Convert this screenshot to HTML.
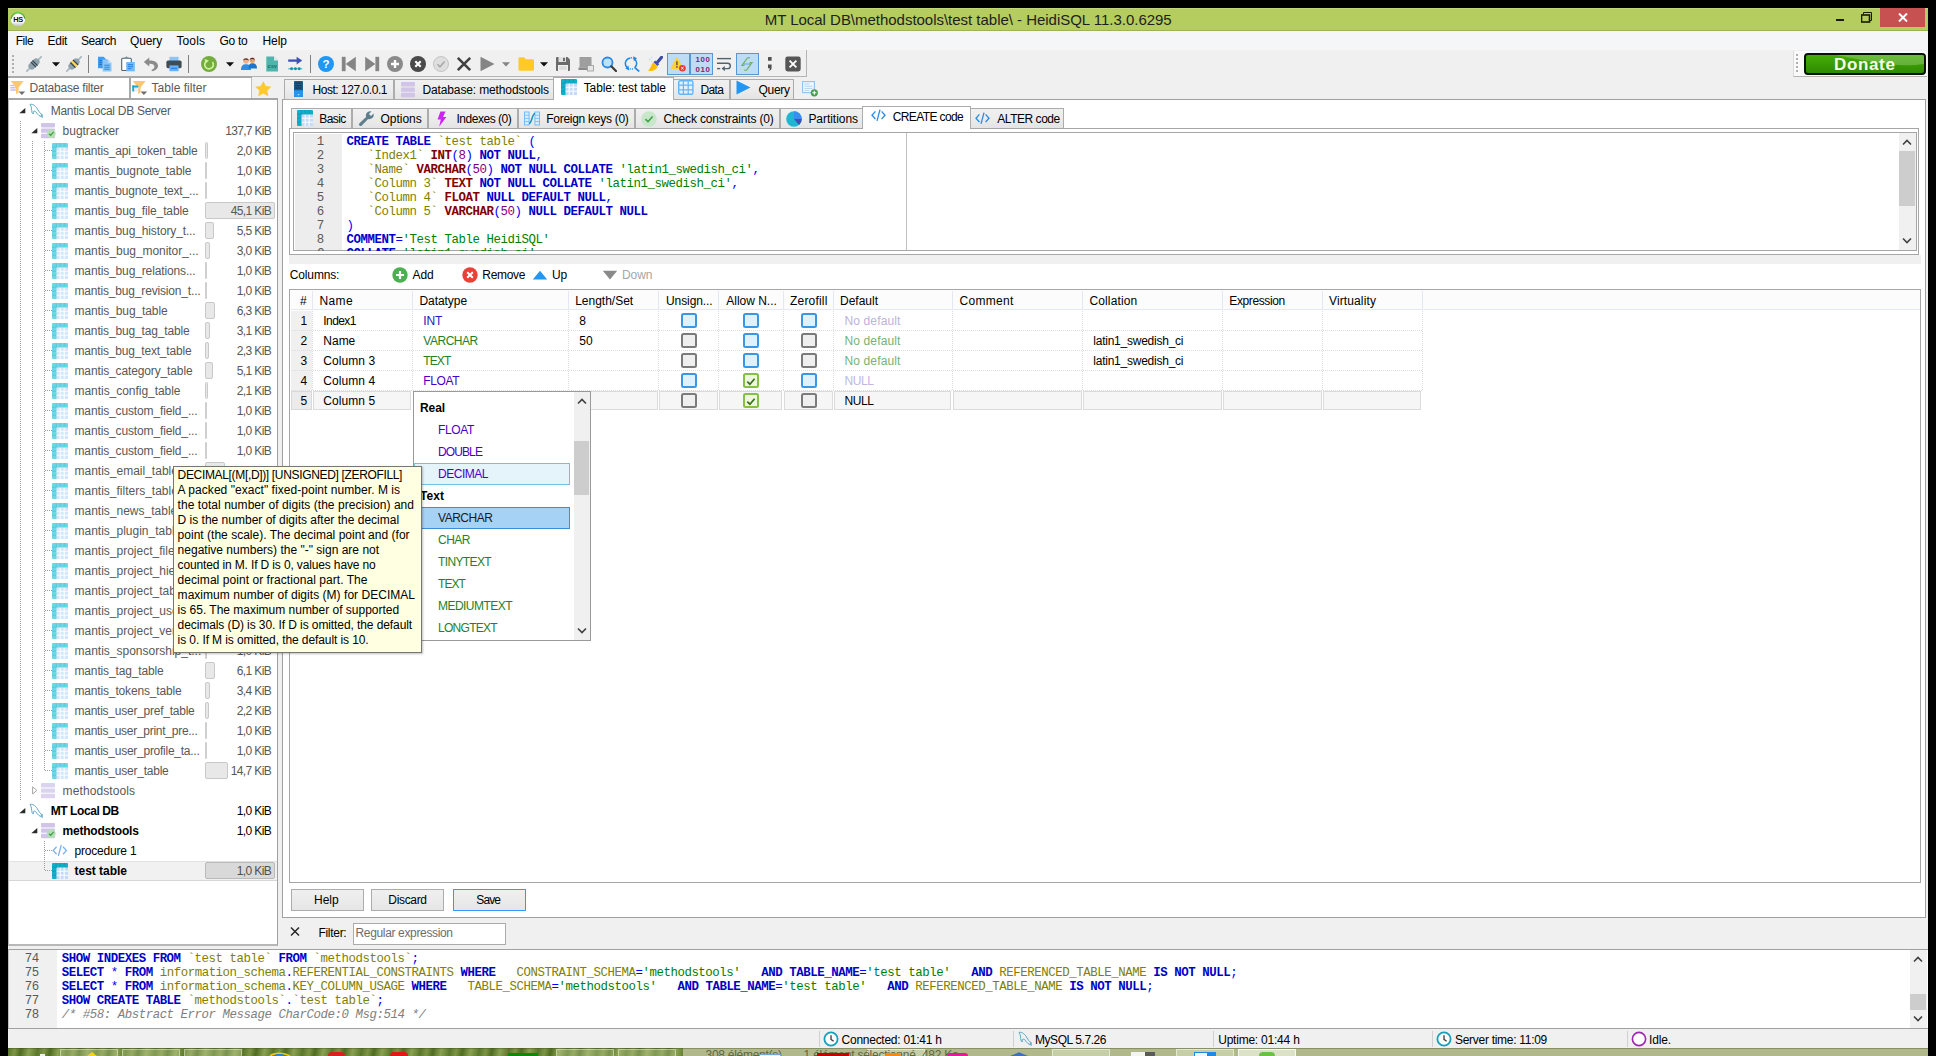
<!DOCTYPE html>
<html lang="en"><head><meta charset="utf-8"><title>HeidiSQL</title><style>
html,body{margin:0;padding:0;}
body{width:1936px;height:1056px;background:#000;position:relative;overflow:hidden;font-family:"Liberation Sans",sans-serif;font-size:12px;}
body div, body svg, body span.t{position:absolute;box-sizing:border-box;}
span.t{white-space:pre;}
.code span{white-space:pre;}
</style></head>
<body>
<div style="left:8px;top:8px;width:1920px;height:1040px;background:#f0f0f0;"></div>
<div style="left:8px;top:8px;width:1920px;height:22.5px;background:#b5cc5f;"></div>
<span class="t" style='left:764.70px;top:10.00px;font-size:15px;line-height:20px;color:#1e1e1e;letter-spacing:-0.022px;'>MT Local DB\methodstools\test table\ - HeidiSQL 11.3.0.6295</span>
<svg style="left:10px;top:11px;" width="16" height="16" viewBox="0 0 16 16"><defs><linearGradient id="hsg" x1="0" y1="0" x2="0" y2="1"><stop offset="0.6" stop-color="#fff"/><stop offset="1" stop-color="#bdbdbd"/></linearGradient><linearGradient id="hsg2" x1="0" y1="0" x2="0" y2="1"><stop offset="0" stop-color="#7fd455"/><stop offset="0.45" stop-color="#3f951f"/></linearGradient></defs><circle cx="8" cy="7.9" r="7.3" fill="url(#hsg2)"/><path d="M0.7 7.9 A7.3 7.3 0 0 0 15.3 7.9 Z" fill="url(#hsg)"/><circle cx="8" cy="9.1" r="6.5" fill="url(#hsg)"/><text x="8" y="10.7" font-size="7.4" font-weight="bold" text-anchor="middle" font-family="Liberation Sans, sans-serif" fill="#111" letter-spacing="-0.3">HS</text></svg>
<div style="left:8px;top:8px;width:1920px;height:1px;background:#c3d67c;"></div>
<div style="left:8px;top:29.5px;width:1920px;height:1px;background:#9fb057;"></div>
<div style="left:1836px;top:19px;width:8px;height:2px;background:#1a1a00;"></div>
<svg style="left:1861px;top:12px;" width="11" height="11" viewBox="0 0 11 11"><path d="M2.5 2.5 V0.5 H10.5 V8.5 H8.5" fill="none" stroke="#1a1a00" stroke-width="1"/><rect x="0.5" y="3" width="8" height="7" fill="none" stroke="#1a1a00" stroke-width="1.6"/></svg>
<div style="left:1880px;top:8px;width:45px;height:19px;background:#c75050;"></div>
<svg style="left:1898px;top:13px;" width="10" height="9" viewBox="0 0 10 9"><path d="M1 0.5 L9 8.5 M9 0.5 L1 8.5" stroke="#fff" stroke-width="2" fill="none"/></svg>
<div style="left:8px;top:31px;width:1920px;height:19px;background:#f5f6f7;"></div>
<span class="t" style='left:15.70px;top:33.00px;font-size:12px;line-height:16px;color:#000;letter-spacing:-0.461px;'>File</span>
<span class="t" style='left:47.60px;top:33.00px;font-size:12px;line-height:16px;color:#000;letter-spacing:-0.297px;'>Edit</span>
<span class="t" style='left:81.00px;top:33.00px;font-size:12px;line-height:16px;color:#000;letter-spacing:-0.505px;'>Search</span>
<span class="t" style='left:130.00px;top:33.00px;font-size:12px;line-height:16px;color:#000;letter-spacing:-0.138px;'>Query</span>
<span class="t" style='left:176.50px;top:33.00px;font-size:12px;line-height:16px;color:#000;letter-spacing:0.097px;'>Tools</span>
<span class="t" style='left:219.50px;top:33.00px;font-size:12px;line-height:16px;color:#000;letter-spacing:-0.272px;'>Go to</span>
<span class="t" style='left:262.50px;top:33.00px;font-size:12px;line-height:16px;color:#000;letter-spacing:-0.047px;'>Help</span>
<div style="left:8px;top:50px;width:799px;height:27px;border-right:1px solid #b4b4b4;border-bottom:1px solid #b4b4b4;"></div>
<div style="left:12px;top:55px;width:2px;height:2px;background:#b0b0b0;"></div>
<div style="left:12px;top:59px;width:2px;height:2px;background:#b0b0b0;"></div>
<div style="left:12px;top:63px;width:2px;height:2px;background:#b0b0b0;"></div>
<div style="left:12px;top:67px;width:2px;height:2px;background:#b0b0b0;"></div>
<div style="left:12px;top:71px;width:2px;height:2px;background:#b0b0b0;"></div>
<div style="left:667px;top:53px;width:23px;height:22px;background:#bfdcf5;border:1px solid #5598d8;"></div>
<div style="left:690px;top:53px;width:23px;height:22px;background:#bfdcf5;border:1px solid #5598d8;"></div>
<div style="left:736px;top:53px;width:23px;height:22px;background:#bfdcf5;border:1px solid #5598d8;"></div>
<svg style="left:26px;top:56px;" width="16" height="16" viewBox="0 0 16 16"><g transform="rotate(45 8 8)"><rect x="7.2" y="-3" width="1.6" height="22" fill="#a9b8c0"/><rect x="4.6" y="1.6" width="6.8" height="12.8" rx="3.2" fill="#8fa3ad"/><rect x="4.4" y="6" width="7.2" height="1.2" fill="#37474f"/><rect x="4.4" y="8.2" width="7.2" height="1.2" fill="#37474f"/></g></svg>
<svg style="left:52px;top:62px;" width="8" height="5" viewBox="0 0 8 5"><path d="M0 0.3 H8 L4 4.6 Z" fill="#111"/></svg>
<svg style="left:66px;top:56px;" width="16" height="16" viewBox="0 0 16 16"><g transform="rotate(45 8 8)"><rect x="7.2" y="-3" width="1.6" height="22" fill="#a9b8c0"/><rect x="4.6" y="1.6" width="6.8" height="12.8" rx="3.2" fill="#8fa3ad"/><rect x="4.4" y="5.2" width="7.2" height="1.3" fill="#37474f"/><rect x="4.4" y="6.5" width="7.2" height="2.4" fill="#ffd54f"/><rect x="4.4" y="8.9" width="7.2" height="1.3" fill="#37474f"/></g></svg>
<div style="left:88px;top:55px;width:1px;height:18px;background:#808080;"></div>
<svg style="left:97px;top:56px;" width="16" height="16" viewBox="0 0 16 16"><path d="M1 0.8 h5.6 l3 3 v8.4 h-8.6z" fill="#3f9bef"/><path d="M2.5 4.5h2M2.5 6.5h2M2.5 8.5h2" stroke="#1b6dc2" stroke-width="1"/><path d="M5.6 3.6 h5.6 l3.3 3.3 v8.6 h-8.9z" fill="#8cc6f8"/><path d="M11.2 3.6 l3.3 3.3 h-3.3z" fill="#c3e1fb"/><path d="M7.3 9.2h5.4M7.3 11.2h5.4M7.3 13.2h5.4" stroke="#2f86dd" stroke-width="1"/></svg>
<svg style="left:120px;top:56px;" width="16" height="16" viewBox="0 0 16 16"><rect x="1.7" y="2.3" width="9.6" height="12.2" rx="1" fill="#fff" stroke="#4f636d" stroke-width="1.1"/><path d="M4.3 2.8 V1.6 h1.2 a1 1 0 0 1 2 0 h1.2 V2.8z" fill="#78909c"/><rect x="6.2" y="6" width="8.6" height="9.3" fill="#74b9f5"/><path d="M7.8 8.6h5.2M7.8 10.6h5.2M7.8 12.6h3.6" stroke="#2a83dc" stroke-width="1"/></svg>
<svg style="left:143px;top:56px;" width="16" height="16" viewBox="0 0 16 16"><path d="M6.3 1.5 L0.8 6 L6.3 10.5 V7.7 C9.6 7.5 11.4 8.6 11.4 10.8 C11.4 12.2 10.4 13.3 8.6 14 L8.9 15.3 C12.6 14.8 15 12.6 15 9.8 C15 6.4 11.6 4.2 6.3 4.4 Z" fill="#8a8a8a"/></svg>
<svg style="left:166px;top:56px;" width="16" height="16" viewBox="0 0 16 16"><rect x="3.4" y="0.8" width="9.2" height="4.6" fill="#8cc6f8"/><rect x="0.4" y="4.6" width="15.2" height="7.6" rx="1.6" fill="#3e4c54"/><rect x="3.4" y="9.4" width="9.2" height="5.8" fill="#64b1f4"/><path d="M5 12.4h6" stroke="#2a83dc" stroke-width="1.2"/></svg>
<div style="left:188px;top:55px;width:1px;height:18px;background:#808080;"></div>
<svg style="left:201px;top:56px;" width="16" height="16" viewBox="0 0 16 16"><circle cx="8" cy="8" r="8" fill="#74ad3d"/><path d="M5.4 5.2 A4.3 4.3 0 1 0 11.4 5.9" fill="none" stroke="#cdf59a" stroke-width="1.6"/><path d="M3.6 2.9 L7.9 4.4 L4.6 7.5 Z" fill="#cdf59a"/></svg>
<svg style="left:226px;top:62px;" width="8" height="5" viewBox="0 0 8 5"><path d="M0 0.3 H8 L4 4.6 Z" fill="#111"/></svg>
<svg style="left:241px;top:56px;" width="16" height="16" viewBox="0 0 16 16"><circle cx="5" cy="5" r="2.8" fill="#f2b184"/><path d="M0 14 C0 9.5 2 8.3 5 8.3 C8 8.3 10 9.5 10 14 Z" fill="#2f8de4"/><circle cx="11.3" cy="4.2" r="2.6" fill="#e6a06a"/><path d="M7.5 12.5 C7.6 8.5 9 7.3 11.3 7.3 C14 7.3 16 8.5 16 12.5 Z" fill="#1c74d0"/><path d="M2.2 4.5 C2.5 1.5 7.5 1.5 7.8 4.5 C6 3.4 4 3.4 2.2 4.5Z" fill="#5d4037"/><path d="M8.7 3.8 C9 0.9 13.6 0.9 13.9 3.8 C12 2.8 10.5 2.8 8.7 3.8Z" fill="#4e342e"/></svg>
<svg style="left:264px;top:56px;" width="16" height="16" viewBox="0 0 16 16"><path d="M2.3 0.5 h7.7 l4 4 v11 h-11.7z" fill="#4db6ac"/><path d="M10 0.5 l4 4 h-4z" fill="#d4efec"/><text x="8.2" y="11.6" font-size="5.6" font-weight="bold" text-anchor="middle" fill="#0e7369" font-family="Liberation Sans, sans-serif">csv</text></svg>
<svg style="left:287px;top:56px;" width="16" height="16" viewBox="0 0 16 16"><path d="M1.2 4.6 H10.5" stroke="#3f51b5" stroke-width="2.3"/><path d="M9.6 0.8 L15.2 4.6 L9.6 8.4 Z" fill="#3f51b5"/><path d="M1.2 12.8h14" stroke="#26a5b8" stroke-width="0.9"/><circle cx="4.6" cy="12.8" r="1.45" fill="#0f93a8"/><circle cx="8.4" cy="12.8" r="1.45" fill="#0f93a8"/><circle cx="12.2" cy="12.8" r="1.45" fill="#0f93a8"/></svg>
<div style="left:310px;top:55px;width:1px;height:18px;background:#808080;"></div>
<svg style="left:318px;top:56px;" width="16" height="16" viewBox="0 0 16 16"><circle cx="8" cy="8" r="8" fill="#2196f3"/><text x="8" y="12.2" font-size="11.5" font-weight="bold" text-anchor="middle" fill="#fff" font-family="Liberation Sans, sans-serif">?</text></svg>
<svg style="left:341px;top:56px;" width="16" height="16" viewBox="0 0 16 16"><rect x="0.8" y="0.8" width="3.8" height="14.4" fill="#858585"/><path d="M14.8 0.8 V15.2 L4.6 8 Z" fill="#858585"/></svg>
<svg style="left:364px;top:56px;" width="16" height="16" viewBox="0 0 16 16"><rect x="11.4" y="0.8" width="3.8" height="14.4" fill="#858585"/><path d="M1.2 0.8 V15.2 L11.4 8 Z" fill="#858585"/></svg>
<svg style="left:387px;top:56px;" width="16" height="16" viewBox="0 0 16 16"><circle cx="8" cy="8" r="8" fill="#8a8a8a"/><path d="M8 4v8M4 8h8" stroke="#fff" stroke-width="2.4"/></svg>
<svg style="left:410px;top:56px;" width="16" height="16" viewBox="0 0 16 16"><circle cx="8" cy="8" r="8" fill="#4a4a4a"/><path d="M5.3 5.3l5.4 5.4M10.7 5.3l-5.4 5.4" stroke="#fff" stroke-width="2.2"/></svg>
<svg style="left:433px;top:56px;" width="16" height="16" viewBox="0 0 16 16"><circle cx="8" cy="8" r="7.5" fill="#dedede" stroke="#c4c4c4" stroke-width="1"/><path d="M4.5 8.3 L7 10.8 L11.6 5.6" fill="none" stroke="#a8a8a8" stroke-width="1.5"/></svg>
<svg style="left:456px;top:56px;" width="16" height="16" viewBox="0 0 16 16"><path d="M1.8 1.8 L14.2 14.2 M14.2 1.8 L1.8 14.2" stroke="#424242" stroke-width="2.6"/></svg>
<svg style="left:479px;top:56px;" width="16" height="16" viewBox="0 0 16 16"><path d="M1.5 0.8 V15.2 L15.5 8 Z" fill="#858585"/></svg>
<svg style="left:502px;top:62px;" width="8" height="5" viewBox="0 0 8 5"><path d="M0 0.3 H8 L4 4.6 Z" fill="#858585"/></svg>
<svg style="left:518px;top:56px;" width="16" height="16" viewBox="0 0 16 16"><path d="M0.5 2.5 a1.2 1.2 0 0 1 1.2 -1.2 h4.3 l1.8 2 h7 a1.2 1.2 0 0 1 1.2 1.2 v9 a1.2 1.2 0 0 1 -1.2 1.2 h-13.1 a1.2 1.2 0 0 1 -1.2 -1.2z" fill="#ffca28"/></svg>
<svg style="left:540px;top:62px;" width="8" height="5" viewBox="0 0 8 5"><path d="M0 0.3 H8 L4 4.6 Z" fill="#111"/></svg>
<svg style="left:555px;top:56px;" width="16" height="16" viewBox="0 0 16 16"><path d="M1 2 a1 1 0 0 1 1 -1 h10.5 l2.5 2.5 v10.5 a1 1 0 0 1 -1 1 h-12 a1 1 0 0 1 -1 -1z" fill="#6b6b6b"/><rect x="3.5" y="1" width="7.5" height="5" fill="#e2e2e2"/><rect x="8" y="1.8" width="2" height="3.4" fill="#6b6b6b"/><rect x="3" y="9" width="10" height="6" fill="#f2f2f2"/><path d="M4.2 11h7.6M4.2 13h7.6" stroke="#bdbdbd" stroke-width="0.8"/></svg>
<svg style="left:578px;top:56px;" width="16" height="16" viewBox="0 0 16 16"><path d="M1.5 1 h12 v10.5 h-12z" fill="#9e9e9e"/><rect x="0.5" y="11.5" width="9" height="2.5" fill="#8a8a8a"/><rect x="9.5" y="9.5" width="6" height="5.5" fill="#e6e6e6" stroke="#9a9a9a" stroke-width="0.8"/></svg>
<svg style="left:601px;top:56px;" width="16" height="16" viewBox="0 0 16 16"><circle cx="6.5" cy="6.5" r="5" fill="#bfe0fb" stroke="#2b8be0" stroke-width="1.8"/><path d="M10.3 10.3 L15 15" stroke="#3a3a3a" stroke-width="2.2" stroke-linecap="round"/></svg>
<svg style="left:624px;top:56px;" width="16" height="16" viewBox="0 0 16 16"><path d="M6.4 1.9 A5.6 5.6 0 0 0 3 11.4" fill="none" stroke="#1e88e5" stroke-width="1.5"/><path d="M10.4 2.9 A5.6 5.6 0 0 1 10.6 11.8" fill="none" stroke="#1e88e5" stroke-width="1.5"/><path d="M3.8 12.1 A5.6 5.6 0 0 0 9.2 12.6" fill="none" stroke="#1e88e5" stroke-width="1.4" stroke-dasharray="1 1.1"/><path d="M6.9 1.8 A5.6 5.6 0 0 1 9.6 2.4" fill="none" stroke="#1e88e5" stroke-width="1.4" stroke-dasharray="1 1"/><path d="M9.2 0.2 L13 2.2 L9.9 5.2Z" fill="#1e88e5"/><path d="M5.2 14.6 L1.4 12.6 L4.4 9.6Z" fill="#1e88e5"/><path d="M10.8 11.6 L15.2 15.4" stroke="#1e88e5" stroke-width="1.7"/></svg>
<svg style="left:647px;top:56px;" width="16" height="16" viewBox="0 0 16 16"><path d="M14.6 1.2 L9.8 7" stroke="#3949ab" stroke-width="3" stroke-linecap="round"/><path d="M8.2 4.4 L12.2 8.2 L10.4 10 L6.4 6.2Z" fill="#3f51b5"/><path d="M6.2 6 L10.6 10.2 C10 13.2 6.5 15.6 1 14.8 C3.6 12.6 4 9 6.2 6Z" fill="#ffc107"/><path d="M3 13.6 C5 12.6 6.6 11 7.6 9" stroke="#ffa000" stroke-width="0.7" fill="none"/><circle cx="2.6" cy="3.4" r="0.9" fill="#bbdefb"/><circle cx="4.6" cy="1.4" r="0.7" fill="#bbdefb"/><circle cx="4.4" cy="5.2" r="0.6" fill="#bbdefb"/></svg>
<svg style="left:670px;top:56px;" width="16" height="16" viewBox="0 0 16 16"><path d="M6.1 1.9 a0.9 0.9 0 0 1 1.6 0 L13 11.8 a0.9 0.9 0 0 1 -0.8 1.3 H1.6 a0.9 0.9 0 0 1 -0.8 -1.3Z" fill="#fdd13a"/><path d="M6.9 5.2v4" stroke="#6d4c41" stroke-width="1.4"/><circle cx="6.9" cy="10.9" r="0.85" fill="#6d4c41"/><circle cx="12.4" cy="12.2" r="3.3" fill="#e53935"/><path d="M11.2 11l2.4 2.4M13.6 11l-2.4 2.4" stroke="#fff" stroke-width="1"/></svg>
<div style='left:693px;top:55.3px;width:20px;height:20px;font:bold 7.9px/9.3px "Liberation Sans", sans-serif;color:#8a1c74;letter-spacing:0.65px;text-align:center;'><span>100</span><br><span>010</span></div>
<svg style="left:716px;top:56px;" width="16" height="16" viewBox="0 0 16 16"><path d="M1 2.6h14" stroke="#4f636d" stroke-width="1.4" fill="none"/><path d="M1 7.2h10.6 a2.7 2.7 0 0 1 0 5.4 h-3.4" fill="none" stroke="#4f636d" stroke-width="1.4"/><path d="M8.8 9.9 L5.6 12.6 L8.8 15.3Z" fill="#4f636d"/><path d="M1 12.6h3.2" stroke="#4f636d" stroke-width="1.4"/></svg>
<svg style="left:739px;top:56px;" width="16" height="16" viewBox="0 0 16 16"><path d="M10.8 1.6 L8.4 2 L3 9.4 L5.4 9.4" fill="none" stroke="#6db35c" stroke-width="1.25"/><path d="M5.2 14.4 L7.6 14 L13 6.6 L10.6 6.6" fill="none" stroke="#6db35c" stroke-width="1.25"/><path d="M5.2 8h5.8" stroke="#2b7fd8" stroke-width="1.2" stroke-dasharray="1.3 0.9"/></svg>
<svg style="left:762px;top:56px;" width="16" height="16" viewBox="0 0 16 16"><rect x="6" y="1" width="3.6" height="3.8" rx="0.5" fill="#505050"/><path d="M6 8.6 h3.6 v3.2 c0 1.7 -1 2.9 -3.2 3.3 c1.1 -1 1.4 -1.9 1.3 -2.9 h-1.7z" fill="#505050"/></svg>
<svg style="left:785px;top:56px;" width="16" height="16" viewBox="0 0 16 16"><rect x="0.3" y="0.6" width="15.4" height="14.8" rx="2.4" fill="#565656"/><path d="M4.6 4.6l6.8 6.8M11.4 4.6l-6.8 6.8" stroke="#fff" stroke-width="1.8"/></svg>
<div style="left:1793px;top:51px;width:134px;height:26px;background:#fafafa;border-left:1px solid #dcdcdc;border-bottom:1px solid #b4b4b4;"></div>
<div style="left:1796px;top:54px;width:2px;height:2px;background:#b0b0b0;"></div>
<div style="left:1796px;top:58px;width:2px;height:2px;background:#b0b0b0;"></div>
<div style="left:1796px;top:62px;width:2px;height:2px;background:#b0b0b0;"></div>
<div style="left:1796px;top:66px;width:2px;height:2px;background:#b0b0b0;"></div>
<div style="left:1796px;top:70px;width:2px;height:2px;background:#b0b0b0;"></div>
<div style="left:1804px;top:53px;width:122px;height:22px;background:linear-gradient(#43ad05,#3c9e04 45%,#2f8a02);border:2px solid #081203;border-radius:4px;"></div>
<svg style="left:1806px;top:55px;" width="118" height="18" viewBox="0 0 118 18"><path d="M30 0 H118 V9 C90 13 60 6 30 0Z" fill="rgba(255,255,255,0.22)"/></svg>
<span class="t" style='left:1834.00px;top:53.00px;font-size:17px;line-height:23px;color:#f4ffe8;font-weight:bold;letter-spacing:0.646px;'>Donate</span>
<div style="left:8px;top:76px;width:244px;height:2px;background:#a9a9a9;"></div>
<div style="left:9px;top:78px;width:122px;height:20px;background:#fff;border-right:2px solid #a9a9a9;"></div>
<div style="left:131px;top:78px;width:121px;height:20px;background:#fff;border-right:1px solid #c0c0c0;"></div>
<span class="t" style='left:29.60px;top:80.00px;font-size:12px;line-height:16px;color:#5a5a5a;letter-spacing:-0.225px;'>Database filter</span>
<span class="t" style='left:151.60px;top:80.00px;font-size:12px;line-height:16px;color:#5a5a5a;letter-spacing:0.025px;'>Table filter</span>
<svg style="left:10.3px;top:80px;" width="18" height="16" viewBox="0 0 18 16"><path d="M0.3 5.6h5.6M0.3 7.8h5.6M0.3 10h5.6" stroke="#cdbdea" stroke-width="1.5"/><path d="M0.6 1 H13.6 L8.6 7.6 V12.8 L6 14 V7.6 Z" fill="#fcc772"/><path d="M8.6 11.4 h6.6 l-3.3 3.6z" fill="#6e6e6e"/></svg>
<svg style="left:132.3px;top:80px;" width="18" height="16" viewBox="0 0 18 16"><path d="M0.6 1 H13.6 L8.6 7.6 V12.8 L6 14 V7.6 Z" fill="#fcc772"/><path d="M8.6 11.4 h6.6 l-3.3 3.6z" fill="#6e6e6e"/><rect x="0.3" y="5.5" width="6" height="6" fill="#e4f1fd"/><rect x="0.3" y="5.5" width="6" height="2" fill="#19aac3"/><rect x="0.3" y="5.5" width="1.8" height="6" fill="#19aac3"/></svg>
<svg style="left:254.5px;top:80.5px;" width="17" height="16" viewBox="0 0 17 16"><path d="M8.3 0.6 L10.7 5.3 L15.8 6 L12 9.6 L13 14.8 L8.3 12.3 L3.6 14.8 L4.6 9.6 L0.8 6 L5.9 5.3 Z" fill="#fdc92f" stroke="#fdc92f" stroke-width="0.6" stroke-linejoin="round"/></svg>
<div style="left:8px;top:98px;width:270px;height:848px;background:#fff;border-top:2px solid #a6a6a6;border-right:1px solid #a0a0a0;border-left:1px solid #b8b8b8;border-bottom:2px solid #b8b8b8;"></div>
<div style="left:9px;top:861px;width:268px;height:20px;background:#f1f1f1;border-top:1px solid #e2e2e2;border-bottom:1px solid #d6d6d6;"></div>
<div style="left:20px;top:121px;width:1px;height:680px;background:repeating-linear-gradient(#9c9c9c 0 1px,transparent 1px 2px);"></div>
<div style="left:32px;top:141px;width:1px;height:641px;background:repeating-linear-gradient(#9c9c9c 0 1px,transparent 1px 2px);"></div>
<div style="left:44px;top:141px;width:1px;height:630px;background:repeating-linear-gradient(#9c9c9c 0 1px,transparent 1px 2px);"></div>
<div style="left:45px;top:150px;width:7px;height:1px;background:repeating-linear-gradient(90deg,#9c9c9c 0 1px,transparent 1px 2px);"></div>
<div style="left:45px;top:170px;width:7px;height:1px;background:repeating-linear-gradient(90deg,#9c9c9c 0 1px,transparent 1px 2px);"></div>
<div style="left:45px;top:190px;width:7px;height:1px;background:repeating-linear-gradient(90deg,#9c9c9c 0 1px,transparent 1px 2px);"></div>
<div style="left:45px;top:210px;width:7px;height:1px;background:repeating-linear-gradient(90deg,#9c9c9c 0 1px,transparent 1px 2px);"></div>
<div style="left:45px;top:230px;width:7px;height:1px;background:repeating-linear-gradient(90deg,#9c9c9c 0 1px,transparent 1px 2px);"></div>
<div style="left:45px;top:250px;width:7px;height:1px;background:repeating-linear-gradient(90deg,#9c9c9c 0 1px,transparent 1px 2px);"></div>
<div style="left:45px;top:270px;width:7px;height:1px;background:repeating-linear-gradient(90deg,#9c9c9c 0 1px,transparent 1px 2px);"></div>
<div style="left:45px;top:290px;width:7px;height:1px;background:repeating-linear-gradient(90deg,#9c9c9c 0 1px,transparent 1px 2px);"></div>
<div style="left:45px;top:310px;width:7px;height:1px;background:repeating-linear-gradient(90deg,#9c9c9c 0 1px,transparent 1px 2px);"></div>
<div style="left:45px;top:330px;width:7px;height:1px;background:repeating-linear-gradient(90deg,#9c9c9c 0 1px,transparent 1px 2px);"></div>
<div style="left:45px;top:350px;width:7px;height:1px;background:repeating-linear-gradient(90deg,#9c9c9c 0 1px,transparent 1px 2px);"></div>
<div style="left:45px;top:370px;width:7px;height:1px;background:repeating-linear-gradient(90deg,#9c9c9c 0 1px,transparent 1px 2px);"></div>
<div style="left:45px;top:390px;width:7px;height:1px;background:repeating-linear-gradient(90deg,#9c9c9c 0 1px,transparent 1px 2px);"></div>
<div style="left:45px;top:410px;width:7px;height:1px;background:repeating-linear-gradient(90deg,#9c9c9c 0 1px,transparent 1px 2px);"></div>
<div style="left:45px;top:430px;width:7px;height:1px;background:repeating-linear-gradient(90deg,#9c9c9c 0 1px,transparent 1px 2px);"></div>
<div style="left:45px;top:450px;width:7px;height:1px;background:repeating-linear-gradient(90deg,#9c9c9c 0 1px,transparent 1px 2px);"></div>
<div style="left:45px;top:470px;width:7px;height:1px;background:repeating-linear-gradient(90deg,#9c9c9c 0 1px,transparent 1px 2px);"></div>
<div style="left:45px;top:490px;width:7px;height:1px;background:repeating-linear-gradient(90deg,#9c9c9c 0 1px,transparent 1px 2px);"></div>
<div style="left:45px;top:510px;width:7px;height:1px;background:repeating-linear-gradient(90deg,#9c9c9c 0 1px,transparent 1px 2px);"></div>
<div style="left:45px;top:530px;width:7px;height:1px;background:repeating-linear-gradient(90deg,#9c9c9c 0 1px,transparent 1px 2px);"></div>
<div style="left:45px;top:550px;width:7px;height:1px;background:repeating-linear-gradient(90deg,#9c9c9c 0 1px,transparent 1px 2px);"></div>
<div style="left:45px;top:570px;width:7px;height:1px;background:repeating-linear-gradient(90deg,#9c9c9c 0 1px,transparent 1px 2px);"></div>
<div style="left:45px;top:590px;width:7px;height:1px;background:repeating-linear-gradient(90deg,#9c9c9c 0 1px,transparent 1px 2px);"></div>
<div style="left:45px;top:610px;width:7px;height:1px;background:repeating-linear-gradient(90deg,#9c9c9c 0 1px,transparent 1px 2px);"></div>
<div style="left:45px;top:630px;width:7px;height:1px;background:repeating-linear-gradient(90deg,#9c9c9c 0 1px,transparent 1px 2px);"></div>
<div style="left:45px;top:650px;width:7px;height:1px;background:repeating-linear-gradient(90deg,#9c9c9c 0 1px,transparent 1px 2px);"></div>
<div style="left:45px;top:670px;width:7px;height:1px;background:repeating-linear-gradient(90deg,#9c9c9c 0 1px,transparent 1px 2px);"></div>
<div style="left:45px;top:690px;width:7px;height:1px;background:repeating-linear-gradient(90deg,#9c9c9c 0 1px,transparent 1px 2px);"></div>
<div style="left:45px;top:710px;width:7px;height:1px;background:repeating-linear-gradient(90deg,#9c9c9c 0 1px,transparent 1px 2px);"></div>
<div style="left:45px;top:730px;width:7px;height:1px;background:repeating-linear-gradient(90deg,#9c9c9c 0 1px,transparent 1px 2px);"></div>
<div style="left:45px;top:750px;width:7px;height:1px;background:repeating-linear-gradient(90deg,#9c9c9c 0 1px,transparent 1px 2px);"></div>
<div style="left:45px;top:770px;width:7px;height:1px;background:repeating-linear-gradient(90deg,#9c9c9c 0 1px,transparent 1px 2px);"></div>
<div style="left:44px;top:841px;width:1px;height:30px;background:repeating-linear-gradient(#9c9c9c 0 1px,transparent 1px 2px);"></div>
<div style="left:45px;top:850px;width:7px;height:1px;background:repeating-linear-gradient(90deg,#9c9c9c 0 1px,transparent 1px 2px);"></div>
<div style="left:45px;top:870px;width:7px;height:1px;background:repeating-linear-gradient(90deg,#9c9c9c 0 1px,transparent 1px 2px);"></div>
<svg style="left:19px;top:108px;" width="7" height="6" viewBox="0 0 7 6"><path d="M6.3 0 V5.3 H0.3 Z" fill="#2a2a2a"/></svg>
<svg style="left:29px;top:103px;" width="16" height="16" viewBox="0 0 16 16"><path d="M1 1.5 C3 0.5 6.5 2.5 8.5 6 C10 8.8 11 10.5 13.8 12.2 L11.8 12.4 L13.8 14.2 C10.5 13.6 8.6 11.5 7 9 C6.3 7.9 5.2 7.8 4.2 8.8 L4.3 11 L3 9.6 C2.4 6.5 2.8 3.5 1 1.5 Z" fill="none" stroke="#4e9fc0" stroke-width="0.9" stroke-linejoin="round"/></svg>
<span class="t" style='left:50.70px;top:103.00px;font-size:12px;line-height:16px;color:#585858;letter-spacing:-0.275px;'>Mantis Local DB Server</span>
<svg style="left:31px;top:128px;" width="7" height="6" viewBox="0 0 7 6"><path d="M6.3 0 V5.3 H0.3 Z" fill="#2a2a2a"/></svg>
<svg style="left:41px;top:123px;" width="15" height="16" viewBox="0 0 15 16"><rect x="0" y="0" width="14" height="4.4" rx="0.8" fill="#d1c4e9"/><rect x="0" y="5.4" width="14" height="4.4" rx="0.8" fill="#d1c4e9"/><rect x="0" y="10.8" width="14" height="4.4" rx="0.8" fill="#d1c4e9"/><circle cx="10.3" cy="10.6" r="4.4" fill="#b6dfb8"/><path d="M8.1 10.7 L9.7 12.3 L12.6 8.8" fill="none" stroke="#3f9f44" stroke-width="1.3"/></svg>
<span class="t" style='left:62.60px;top:123.00px;font-size:12px;line-height:16px;color:#585858;letter-spacing:-0.020px;'>bugtracker</span>
<span class="t" style='left:225.13px;top:123.00px;font-size:12px;line-height:16px;color:#585858;letter-spacing:-0.672px;'>137,7 KiB</span>
<svg style="left:52px;top:143.0px;" width="16" height="16" viewBox="0 0 16 16"><rect x="0" y="0" width="16" height="16" rx="1" fill="#6fd6e3"/><rect x="4.5" y="4.5" width="11.5" height="11.5" fill="#d3e6fb"/><path d="M4.2 0V4.5M8.2 0V4.5M12.2 0V4.5M0 4.2H4.5M0 8.2H4.5M0 12.2H4.5" stroke="#52c8d8" stroke-width="0.9"/><path d="M8.2 4.5V16M12.2 4.5V16M4.5 8.2H16M4.5 12.2H16" stroke="#fbfdff" stroke-width="1.15"/></svg>
<div style="left:205px;top:142.0px;width:3.0px;height:17px;background:#e8e8e8;border:1px solid #c9c9c9;border-radius:2px;"></div>
<span class="t" style='left:74.50px;top:143.00px;font-size:12px;line-height:16px;color:#585858;letter-spacing:-0.171px;'>mantis_api_token_table</span>
<span class="t" style='left:236.70px;top:143.00px;font-size:12px;line-height:16px;color:#585858;letter-spacing:-0.600px;'>2,0 KiB</span>
<svg style="left:52px;top:163.0px;" width="16" height="16" viewBox="0 0 16 16"><rect x="0" y="0" width="16" height="16" rx="1" fill="#6fd6e3"/><rect x="4.5" y="4.5" width="11.5" height="11.5" fill="#d3e6fb"/><path d="M4.2 0V4.5M8.2 0V4.5M12.2 0V4.5M0 4.2H4.5M0 8.2H4.5M0 12.2H4.5" stroke="#52c8d8" stroke-width="0.9"/><path d="M8.2 4.5V16M12.2 4.5V16M4.5 8.2H16M4.5 12.2H16" stroke="#fbfdff" stroke-width="1.15"/></svg>
<div style="left:205px;top:162.0px;width:2px;height:17px;background:#cfcfcf;border-radius:1px;"></div>
<span class="t" style='left:74.50px;top:163.00px;font-size:12px;line-height:16px;color:#585858;letter-spacing:-0.055px;'>mantis_bugnote_table</span>
<span class="t" style='left:236.70px;top:163.00px;font-size:12px;line-height:16px;color:#585858;letter-spacing:-0.600px;'>1,0 KiB</span>
<svg style="left:52px;top:183.0px;" width="16" height="16" viewBox="0 0 16 16"><rect x="0" y="0" width="16" height="16" rx="1" fill="#6fd6e3"/><rect x="4.5" y="4.5" width="11.5" height="11.5" fill="#d3e6fb"/><path d="M4.2 0V4.5M8.2 0V4.5M12.2 0V4.5M0 4.2H4.5M0 8.2H4.5M0 12.2H4.5" stroke="#52c8d8" stroke-width="0.9"/><path d="M8.2 4.5V16M12.2 4.5V16M4.5 8.2H16M4.5 12.2H16" stroke="#fbfdff" stroke-width="1.15"/></svg>
<div style="left:205px;top:182.0px;width:2px;height:17px;background:#cfcfcf;border-radius:1px;"></div>
<span class="t" style='left:74.50px;top:183.00px;font-size:12px;line-height:16px;color:#585858;letter-spacing:-0.178px;'>mantis_bugnote_text_...</span>
<span class="t" style='left:236.70px;top:183.00px;font-size:12px;line-height:16px;color:#585858;letter-spacing:-0.600px;'>1,0 KiB</span>
<svg style="left:52px;top:203.0px;" width="16" height="16" viewBox="0 0 16 16"><rect x="0" y="0" width="16" height="16" rx="1" fill="#6fd6e3"/><rect x="4.5" y="4.5" width="11.5" height="11.5" fill="#d3e6fb"/><path d="M4.2 0V4.5M8.2 0V4.5M12.2 0V4.5M0 4.2H4.5M0 8.2H4.5M0 12.2H4.5" stroke="#52c8d8" stroke-width="0.9"/><path d="M8.2 4.5V16M12.2 4.5V16M4.5 8.2H16M4.5 12.2H16" stroke="#fbfdff" stroke-width="1.15"/></svg>
<div style="left:205px;top:202.0px;width:69.5px;height:17px;background:#e8e8e8;border:1px solid #c9c9c9;border-radius:2px;"></div>
<span class="t" style='left:74.50px;top:203.00px;font-size:12px;line-height:16px;color:#585858;letter-spacing:-0.131px;'>mantis_bug_file_table</span>
<span class="t" style='left:230.69px;top:203.00px;font-size:12px;line-height:16px;color:#585858;letter-spacing:-0.609px;'>45,1 KiB</span>
<svg style="left:52px;top:223.0px;" width="16" height="16" viewBox="0 0 16 16"><rect x="0" y="0" width="16" height="16" rx="1" fill="#6fd6e3"/><rect x="4.5" y="4.5" width="11.5" height="11.5" fill="#d3e6fb"/><path d="M4.2 0V4.5M8.2 0V4.5M12.2 0V4.5M0 4.2H4.5M0 8.2H4.5M0 12.2H4.5" stroke="#52c8d8" stroke-width="0.9"/><path d="M8.2 4.5V16M12.2 4.5V16M4.5 8.2H16M4.5 12.2H16" stroke="#fbfdff" stroke-width="1.15"/></svg>
<div style="left:205px;top:222.0px;width:8.5px;height:17px;background:#e8e8e8;border:1px solid #c9c9c9;border-radius:2px;"></div>
<span class="t" style='left:74.50px;top:223.00px;font-size:12px;line-height:16px;color:#585858;letter-spacing:-0.134px;'>mantis_bug_history_t...</span>
<span class="t" style='left:236.70px;top:223.00px;font-size:12px;line-height:16px;color:#585858;letter-spacing:-0.600px;'>5,5 KiB</span>
<svg style="left:52px;top:243.0px;" width="16" height="16" viewBox="0 0 16 16"><rect x="0" y="0" width="16" height="16" rx="1" fill="#6fd6e3"/><rect x="4.5" y="4.5" width="11.5" height="11.5" fill="#d3e6fb"/><path d="M4.2 0V4.5M8.2 0V4.5M12.2 0V4.5M0 4.2H4.5M0 8.2H4.5M0 12.2H4.5" stroke="#52c8d8" stroke-width="0.9"/><path d="M8.2 4.5V16M12.2 4.5V16M4.5 8.2H16M4.5 12.2H16" stroke="#fbfdff" stroke-width="1.15"/></svg>
<div style="left:205px;top:242.0px;width:4.5px;height:17px;background:#e8e8e8;border:1px solid #c9c9c9;border-radius:2px;"></div>
<span class="t" style='left:74.50px;top:243.00px;font-size:12px;line-height:16px;color:#585858;letter-spacing:-0.064px;'>mantis_bug_monitor_...</span>
<span class="t" style='left:236.70px;top:243.00px;font-size:12px;line-height:16px;color:#585858;letter-spacing:-0.600px;'>3,0 KiB</span>
<svg style="left:52px;top:263.0px;" width="16" height="16" viewBox="0 0 16 16"><rect x="0" y="0" width="16" height="16" rx="1" fill="#6fd6e3"/><rect x="4.5" y="4.5" width="11.5" height="11.5" fill="#d3e6fb"/><path d="M4.2 0V4.5M8.2 0V4.5M12.2 0V4.5M0 4.2H4.5M0 8.2H4.5M0 12.2H4.5" stroke="#52c8d8" stroke-width="0.9"/><path d="M8.2 4.5V16M12.2 4.5V16M4.5 8.2H16M4.5 12.2H16" stroke="#fbfdff" stroke-width="1.15"/></svg>
<div style="left:205px;top:262.0px;width:2px;height:17px;background:#cfcfcf;border-radius:1px;"></div>
<span class="t" style='left:74.50px;top:263.00px;font-size:12px;line-height:16px;color:#585858;letter-spacing:-0.134px;'>mantis_bug_relations...</span>
<span class="t" style='left:236.70px;top:263.00px;font-size:12px;line-height:16px;color:#585858;letter-spacing:-0.600px;'>1,0 KiB</span>
<svg style="left:52px;top:283.0px;" width="16" height="16" viewBox="0 0 16 16"><rect x="0" y="0" width="16" height="16" rx="1" fill="#6fd6e3"/><rect x="4.5" y="4.5" width="11.5" height="11.5" fill="#d3e6fb"/><path d="M4.2 0V4.5M8.2 0V4.5M12.2 0V4.5M0 4.2H4.5M0 8.2H4.5M0 12.2H4.5" stroke="#52c8d8" stroke-width="0.9"/><path d="M8.2 4.5V16M12.2 4.5V16M4.5 8.2H16M4.5 12.2H16" stroke="#fbfdff" stroke-width="1.15"/></svg>
<div style="left:205px;top:282.0px;width:2px;height:17px;background:#cfcfcf;border-radius:1px;"></div>
<span class="t" style='left:74.50px;top:283.00px;font-size:12px;line-height:16px;color:#585858;letter-spacing:-0.170px;'>mantis_bug_revision_t...</span>
<span class="t" style='left:236.70px;top:283.00px;font-size:12px;line-height:16px;color:#585858;letter-spacing:-0.600px;'>1,0 KiB</span>
<svg style="left:52px;top:303.0px;" width="16" height="16" viewBox="0 0 16 16"><rect x="0" y="0" width="16" height="16" rx="1" fill="#6fd6e3"/><rect x="4.5" y="4.5" width="11.5" height="11.5" fill="#d3e6fb"/><path d="M4.2 0V4.5M8.2 0V4.5M12.2 0V4.5M0 4.2H4.5M0 8.2H4.5M0 12.2H4.5" stroke="#52c8d8" stroke-width="0.9"/><path d="M8.2 4.5V16M12.2 4.5V16M4.5 8.2H16M4.5 12.2H16" stroke="#fbfdff" stroke-width="1.15"/></svg>
<div style="left:205px;top:302.0px;width:9.5px;height:17px;background:#e8e8e8;border:1px solid #c9c9c9;border-radius:2px;"></div>
<span class="t" style='left:74.50px;top:303.00px;font-size:12px;line-height:16px;color:#585858;letter-spacing:-0.108px;'>mantis_bug_table</span>
<span class="t" style='left:236.70px;top:303.00px;font-size:12px;line-height:16px;color:#585858;letter-spacing:-0.600px;'>6,3 KiB</span>
<svg style="left:52px;top:323.0px;" width="16" height="16" viewBox="0 0 16 16"><rect x="0" y="0" width="16" height="16" rx="1" fill="#6fd6e3"/><rect x="4.5" y="4.5" width="11.5" height="11.5" fill="#d3e6fb"/><path d="M4.2 0V4.5M8.2 0V4.5M12.2 0V4.5M0 4.2H4.5M0 8.2H4.5M0 12.2H4.5" stroke="#52c8d8" stroke-width="0.9"/><path d="M8.2 4.5V16M12.2 4.5V16M4.5 8.2H16M4.5 12.2H16" stroke="#fbfdff" stroke-width="1.15"/></svg>
<div style="left:205px;top:322.0px;width:5.0px;height:17px;background:#e8e8e8;border:1px solid #c9c9c9;border-radius:2px;"></div>
<span class="t" style='left:74.50px;top:323.00px;font-size:12px;line-height:16px;color:#585858;letter-spacing:-0.155px;'>mantis_bug_tag_table</span>
<span class="t" style='left:236.70px;top:323.00px;font-size:12px;line-height:16px;color:#585858;letter-spacing:-0.600px;'>3,1 KiB</span>
<svg style="left:52px;top:343.0px;" width="16" height="16" viewBox="0 0 16 16"><rect x="0" y="0" width="16" height="16" rx="1" fill="#6fd6e3"/><rect x="4.5" y="4.5" width="11.5" height="11.5" fill="#d3e6fb"/><path d="M4.2 0V4.5M8.2 0V4.5M12.2 0V4.5M0 4.2H4.5M0 8.2H4.5M0 12.2H4.5" stroke="#52c8d8" stroke-width="0.9"/><path d="M8.2 4.5V16M12.2 4.5V16M4.5 8.2H16M4.5 12.2H16" stroke="#fbfdff" stroke-width="1.15"/></svg>
<div style="left:205px;top:342.0px;width:3.5px;height:17px;background:#e8e8e8;border:1px solid #c9c9c9;border-radius:2px;"></div>
<span class="t" style='left:74.50px;top:343.00px;font-size:12px;line-height:16px;color:#585858;letter-spacing:-0.179px;'>mantis_bug_text_table</span>
<span class="t" style='left:236.70px;top:343.00px;font-size:12px;line-height:16px;color:#585858;letter-spacing:-0.600px;'>2,3 KiB</span>
<svg style="left:52px;top:363.0px;" width="16" height="16" viewBox="0 0 16 16"><rect x="0" y="0" width="16" height="16" rx="1" fill="#6fd6e3"/><rect x="4.5" y="4.5" width="11.5" height="11.5" fill="#d3e6fb"/><path d="M4.2 0V4.5M8.2 0V4.5M12.2 0V4.5M0 4.2H4.5M0 8.2H4.5M0 12.2H4.5" stroke="#52c8d8" stroke-width="0.9"/><path d="M8.2 4.5V16M12.2 4.5V16M4.5 8.2H16M4.5 12.2H16" stroke="#fbfdff" stroke-width="1.15"/></svg>
<div style="left:205px;top:362.0px;width:8.0px;height:17px;background:#e8e8e8;border:1px solid #c9c9c9;border-radius:2px;"></div>
<span class="t" style='left:74.50px;top:363.00px;font-size:12px;line-height:16px;color:#585858;letter-spacing:-0.131px;'>mantis_category_table</span>
<span class="t" style='left:236.70px;top:363.00px;font-size:12px;line-height:16px;color:#585858;letter-spacing:-0.600px;'>5,1 KiB</span>
<svg style="left:52px;top:383.0px;" width="16" height="16" viewBox="0 0 16 16"><rect x="0" y="0" width="16" height="16" rx="1" fill="#6fd6e3"/><rect x="4.5" y="4.5" width="11.5" height="11.5" fill="#d3e6fb"/><path d="M4.2 0V4.5M8.2 0V4.5M12.2 0V4.5M0 4.2H4.5M0 8.2H4.5M0 12.2H4.5" stroke="#52c8d8" stroke-width="0.9"/><path d="M8.2 4.5V16M12.2 4.5V16M4.5 8.2H16M4.5 12.2H16" stroke="#fbfdff" stroke-width="1.15"/></svg>
<div style="left:205px;top:382.0px;width:3.0px;height:17px;background:#e8e8e8;border:1px solid #c9c9c9;border-radius:2px;"></div>
<span class="t" style='left:74.50px;top:383.00px;font-size:12px;line-height:16px;color:#585858;letter-spacing:-0.039px;'>mantis_config_table</span>
<span class="t" style='left:236.70px;top:383.00px;font-size:12px;line-height:16px;color:#585858;letter-spacing:-0.600px;'>2,1 KiB</span>
<svg style="left:52px;top:403.0px;" width="16" height="16" viewBox="0 0 16 16"><rect x="0" y="0" width="16" height="16" rx="1" fill="#6fd6e3"/><rect x="4.5" y="4.5" width="11.5" height="11.5" fill="#d3e6fb"/><path d="M4.2 0V4.5M8.2 0V4.5M12.2 0V4.5M0 4.2H4.5M0 8.2H4.5M0 12.2H4.5" stroke="#52c8d8" stroke-width="0.9"/><path d="M8.2 4.5V16M12.2 4.5V16M4.5 8.2H16M4.5 12.2H16" stroke="#fbfdff" stroke-width="1.15"/></svg>
<div style="left:205px;top:402.0px;width:2px;height:17px;background:#cfcfcf;border-radius:1px;"></div>
<span class="t" style='left:74.50px;top:403.00px;font-size:12px;line-height:16px;color:#585858;letter-spacing:-0.133px;'>mantis_custom_field_...</span>
<span class="t" style='left:236.70px;top:403.00px;font-size:12px;line-height:16px;color:#585858;letter-spacing:-0.600px;'>1,0 KiB</span>
<svg style="left:52px;top:423.0px;" width="16" height="16" viewBox="0 0 16 16"><rect x="0" y="0" width="16" height="16" rx="1" fill="#6fd6e3"/><rect x="4.5" y="4.5" width="11.5" height="11.5" fill="#d3e6fb"/><path d="M4.2 0V4.5M8.2 0V4.5M12.2 0V4.5M0 4.2H4.5M0 8.2H4.5M0 12.2H4.5" stroke="#52c8d8" stroke-width="0.9"/><path d="M8.2 4.5V16M12.2 4.5V16M4.5 8.2H16M4.5 12.2H16" stroke="#fbfdff" stroke-width="1.15"/></svg>
<div style="left:205px;top:422.0px;width:2px;height:17px;background:#cfcfcf;border-radius:1px;"></div>
<span class="t" style='left:74.50px;top:423.00px;font-size:12px;line-height:16px;color:#585858;letter-spacing:-0.133px;'>mantis_custom_field_...</span>
<span class="t" style='left:236.70px;top:423.00px;font-size:12px;line-height:16px;color:#585858;letter-spacing:-0.600px;'>1,0 KiB</span>
<svg style="left:52px;top:443.0px;" width="16" height="16" viewBox="0 0 16 16"><rect x="0" y="0" width="16" height="16" rx="1" fill="#6fd6e3"/><rect x="4.5" y="4.5" width="11.5" height="11.5" fill="#d3e6fb"/><path d="M4.2 0V4.5M8.2 0V4.5M12.2 0V4.5M0 4.2H4.5M0 8.2H4.5M0 12.2H4.5" stroke="#52c8d8" stroke-width="0.9"/><path d="M8.2 4.5V16M12.2 4.5V16M4.5 8.2H16M4.5 12.2H16" stroke="#fbfdff" stroke-width="1.15"/></svg>
<div style="left:205px;top:442.0px;width:2px;height:17px;background:#cfcfcf;border-radius:1px;"></div>
<span class="t" style='left:74.50px;top:443.00px;font-size:12px;line-height:16px;color:#585858;letter-spacing:-0.133px;'>mantis_custom_field_...</span>
<span class="t" style='left:236.70px;top:443.00px;font-size:12px;line-height:16px;color:#585858;letter-spacing:-0.600px;'>1,0 KiB</span>
<svg style="left:52px;top:463.0px;" width="16" height="16" viewBox="0 0 16 16"><rect x="0" y="0" width="16" height="16" rx="1" fill="#6fd6e3"/><rect x="4.5" y="4.5" width="11.5" height="11.5" fill="#d3e6fb"/><path d="M4.2 0V4.5M8.2 0V4.5M12.2 0V4.5M0 4.2H4.5M0 8.2H4.5M0 12.2H4.5" stroke="#52c8d8" stroke-width="0.9"/><path d="M8.2 4.5V16M12.2 4.5V16M4.5 8.2H16M4.5 12.2H16" stroke="#fbfdff" stroke-width="1.15"/></svg>
<div style="left:205px;top:462.0px;width:19.5px;height:17px;background:#e8e8e8;border:1px solid #c9c9c9;border-radius:2px;"></div>
<span class="t" style='left:74.50px;top:463.00px;font-size:12px;line-height:16px;color:#585858;'>mantis_email_table</span>
<span class="t" style='left:230.69px;top:463.00px;font-size:12px;line-height:16px;color:#585858;letter-spacing:-0.609px;'>12,8 KiB</span>
<svg style="left:52px;top:483.0px;" width="16" height="16" viewBox="0 0 16 16"><rect x="0" y="0" width="16" height="16" rx="1" fill="#6fd6e3"/><rect x="4.5" y="4.5" width="11.5" height="11.5" fill="#d3e6fb"/><path d="M4.2 0V4.5M8.2 0V4.5M12.2 0V4.5M0 4.2H4.5M0 8.2H4.5M0 12.2H4.5" stroke="#52c8d8" stroke-width="0.9"/><path d="M8.2 4.5V16M12.2 4.5V16M4.5 8.2H16M4.5 12.2H16" stroke="#fbfdff" stroke-width="1.15"/></svg>
<div style="left:205px;top:482.0px;width:2px;height:17px;background:#cfcfcf;border-radius:1px;"></div>
<span class="t" style='left:74.50px;top:483.00px;font-size:12px;line-height:16px;color:#585858;'>mantis_filters_table</span>
<span class="t" style='left:236.70px;top:483.00px;font-size:12px;line-height:16px;color:#585858;letter-spacing:-0.600px;'>1,0 KiB</span>
<svg style="left:52px;top:503.0px;" width="16" height="16" viewBox="0 0 16 16"><rect x="0" y="0" width="16" height="16" rx="1" fill="#6fd6e3"/><rect x="4.5" y="4.5" width="11.5" height="11.5" fill="#d3e6fb"/><path d="M4.2 0V4.5M8.2 0V4.5M12.2 0V4.5M0 4.2H4.5M0 8.2H4.5M0 12.2H4.5" stroke="#52c8d8" stroke-width="0.9"/><path d="M8.2 4.5V16M12.2 4.5V16M4.5 8.2H16M4.5 12.2H16" stroke="#fbfdff" stroke-width="1.15"/></svg>
<div style="left:205px;top:502.0px;width:2px;height:17px;background:#cfcfcf;border-radius:1px;"></div>
<span class="t" style='left:74.50px;top:503.00px;font-size:12px;line-height:16px;color:#585858;'>mantis_news_table</span>
<span class="t" style='left:236.70px;top:503.00px;font-size:12px;line-height:16px;color:#585858;letter-spacing:-0.600px;'>1,0 KiB</span>
<svg style="left:52px;top:523.0px;" width="16" height="16" viewBox="0 0 16 16"><rect x="0" y="0" width="16" height="16" rx="1" fill="#6fd6e3"/><rect x="4.5" y="4.5" width="11.5" height="11.5" fill="#d3e6fb"/><path d="M4.2 0V4.5M8.2 0V4.5M12.2 0V4.5M0 4.2H4.5M0 8.2H4.5M0 12.2H4.5" stroke="#52c8d8" stroke-width="0.9"/><path d="M8.2 4.5V16M12.2 4.5V16M4.5 8.2H16M4.5 12.2H16" stroke="#fbfdff" stroke-width="1.15"/></svg>
<div style="left:205px;top:522.0px;width:2px;height:17px;background:#cfcfcf;border-radius:1px;"></div>
<span class="t" style='left:74.50px;top:523.00px;font-size:12px;line-height:16px;color:#585858;'>mantis_plugin_table</span>
<span class="t" style='left:236.70px;top:523.00px;font-size:12px;line-height:16px;color:#585858;letter-spacing:-0.600px;'>1,0 KiB</span>
<svg style="left:52px;top:543.0px;" width="16" height="16" viewBox="0 0 16 16"><rect x="0" y="0" width="16" height="16" rx="1" fill="#6fd6e3"/><rect x="4.5" y="4.5" width="11.5" height="11.5" fill="#d3e6fb"/><path d="M4.2 0V4.5M8.2 0V4.5M12.2 0V4.5M0 4.2H4.5M0 8.2H4.5M0 12.2H4.5" stroke="#52c8d8" stroke-width="0.9"/><path d="M8.2 4.5V16M12.2 4.5V16M4.5 8.2H16M4.5 12.2H16" stroke="#fbfdff" stroke-width="1.15"/></svg>
<div style="left:205px;top:542.0px;width:2px;height:17px;background:#cfcfcf;border-radius:1px;"></div>
<span class="t" style='left:74.50px;top:543.00px;font-size:12px;line-height:16px;color:#585858;'>mantis_project_file_...</span>
<span class="t" style='left:236.70px;top:543.00px;font-size:12px;line-height:16px;color:#585858;letter-spacing:-0.600px;'>1,0 KiB</span>
<svg style="left:52px;top:563.0px;" width="16" height="16" viewBox="0 0 16 16"><rect x="0" y="0" width="16" height="16" rx="1" fill="#6fd6e3"/><rect x="4.5" y="4.5" width="11.5" height="11.5" fill="#d3e6fb"/><path d="M4.2 0V4.5M8.2 0V4.5M12.2 0V4.5M0 4.2H4.5M0 8.2H4.5M0 12.2H4.5" stroke="#52c8d8" stroke-width="0.9"/><path d="M8.2 4.5V16M12.2 4.5V16M4.5 8.2H16M4.5 12.2H16" stroke="#fbfdff" stroke-width="1.15"/></svg>
<div style="left:205px;top:562.0px;width:2px;height:17px;background:#cfcfcf;border-radius:1px;"></div>
<span class="t" style='left:74.50px;top:563.00px;font-size:12px;line-height:16px;color:#585858;'>mantis_project_hier...</span>
<span class="t" style='left:236.70px;top:563.00px;font-size:12px;line-height:16px;color:#585858;letter-spacing:-0.600px;'>1,0 KiB</span>
<svg style="left:52px;top:583.0px;" width="16" height="16" viewBox="0 0 16 16"><rect x="0" y="0" width="16" height="16" rx="1" fill="#6fd6e3"/><rect x="4.5" y="4.5" width="11.5" height="11.5" fill="#d3e6fb"/><path d="M4.2 0V4.5M8.2 0V4.5M12.2 0V4.5M0 4.2H4.5M0 8.2H4.5M0 12.2H4.5" stroke="#52c8d8" stroke-width="0.9"/><path d="M8.2 4.5V16M12.2 4.5V16M4.5 8.2H16M4.5 12.2H16" stroke="#fbfdff" stroke-width="1.15"/></svg>
<div style="left:205px;top:582.0px;width:2px;height:17px;background:#cfcfcf;border-radius:1px;"></div>
<span class="t" style='left:74.50px;top:583.00px;font-size:12px;line-height:16px;color:#585858;'>mantis_project_table</span>
<span class="t" style='left:236.70px;top:583.00px;font-size:12px;line-height:16px;color:#585858;letter-spacing:-0.600px;'>1,0 KiB</span>
<svg style="left:52px;top:603.0px;" width="16" height="16" viewBox="0 0 16 16"><rect x="0" y="0" width="16" height="16" rx="1" fill="#6fd6e3"/><rect x="4.5" y="4.5" width="11.5" height="11.5" fill="#d3e6fb"/><path d="M4.2 0V4.5M8.2 0V4.5M12.2 0V4.5M0 4.2H4.5M0 8.2H4.5M0 12.2H4.5" stroke="#52c8d8" stroke-width="0.9"/><path d="M8.2 4.5V16M12.2 4.5V16M4.5 8.2H16M4.5 12.2H16" stroke="#fbfdff" stroke-width="1.15"/></svg>
<div style="left:205px;top:602.0px;width:2px;height:17px;background:#cfcfcf;border-radius:1px;"></div>
<span class="t" style='left:74.50px;top:603.00px;font-size:12px;line-height:16px;color:#585858;'>mantis_project_user_...</span>
<span class="t" style='left:236.70px;top:603.00px;font-size:12px;line-height:16px;color:#585858;letter-spacing:-0.600px;'>1,0 KiB</span>
<svg style="left:52px;top:623.0px;" width="16" height="16" viewBox="0 0 16 16"><rect x="0" y="0" width="16" height="16" rx="1" fill="#6fd6e3"/><rect x="4.5" y="4.5" width="11.5" height="11.5" fill="#d3e6fb"/><path d="M4.2 0V4.5M8.2 0V4.5M12.2 0V4.5M0 4.2H4.5M0 8.2H4.5M0 12.2H4.5" stroke="#52c8d8" stroke-width="0.9"/><path d="M8.2 4.5V16M12.2 4.5V16M4.5 8.2H16M4.5 12.2H16" stroke="#fbfdff" stroke-width="1.15"/></svg>
<div style="left:205px;top:622.0px;width:2px;height:17px;background:#cfcfcf;border-radius:1px;"></div>
<span class="t" style='left:74.50px;top:623.00px;font-size:12px;line-height:16px;color:#585858;'>mantis_project_vers...</span>
<span class="t" style='left:236.70px;top:623.00px;font-size:12px;line-height:16px;color:#585858;letter-spacing:-0.600px;'>1,0 KiB</span>
<svg style="left:52px;top:643.0px;" width="16" height="16" viewBox="0 0 16 16"><rect x="0" y="0" width="16" height="16" rx="1" fill="#6fd6e3"/><rect x="4.5" y="4.5" width="11.5" height="11.5" fill="#d3e6fb"/><path d="M4.2 0V4.5M8.2 0V4.5M12.2 0V4.5M0 4.2H4.5M0 8.2H4.5M0 12.2H4.5" stroke="#52c8d8" stroke-width="0.9"/><path d="M8.2 4.5V16M12.2 4.5V16M4.5 8.2H16M4.5 12.2H16" stroke="#fbfdff" stroke-width="1.15"/></svg>
<div style="left:205px;top:642.0px;width:2px;height:17px;background:#cfcfcf;border-radius:1px;"></div>
<span class="t" style='left:74.50px;top:643.00px;font-size:12px;line-height:16px;color:#585858;'>mantis_sponsorship_t...</span>
<span class="t" style='left:236.70px;top:643.00px;font-size:12px;line-height:16px;color:#585858;letter-spacing:-0.600px;'>1,0 KiB</span>
<svg style="left:52px;top:663.0px;" width="16" height="16" viewBox="0 0 16 16"><rect x="0" y="0" width="16" height="16" rx="1" fill="#6fd6e3"/><rect x="4.5" y="4.5" width="11.5" height="11.5" fill="#d3e6fb"/><path d="M4.2 0V4.5M8.2 0V4.5M12.2 0V4.5M0 4.2H4.5M0 8.2H4.5M0 12.2H4.5" stroke="#52c8d8" stroke-width="0.9"/><path d="M8.2 4.5V16M12.2 4.5V16M4.5 8.2H16M4.5 12.2H16" stroke="#fbfdff" stroke-width="1.15"/></svg>
<div style="left:205px;top:662.0px;width:9.5px;height:17px;background:#e8e8e8;border:1px solid #c9c9c9;border-radius:2px;"></div>
<span class="t" style='left:74.50px;top:663.00px;font-size:12px;line-height:16px;color:#585858;letter-spacing:-0.150px;'>mantis_tag_table</span>
<span class="t" style='left:236.70px;top:663.00px;font-size:12px;line-height:16px;color:#585858;letter-spacing:-0.600px;'>6,1 KiB</span>
<svg style="left:52px;top:683.0px;" width="16" height="16" viewBox="0 0 16 16"><rect x="0" y="0" width="16" height="16" rx="1" fill="#6fd6e3"/><rect x="4.5" y="4.5" width="11.5" height="11.5" fill="#d3e6fb"/><path d="M4.2 0V4.5M8.2 0V4.5M12.2 0V4.5M0 4.2H4.5M0 8.2H4.5M0 12.2H4.5" stroke="#52c8d8" stroke-width="0.9"/><path d="M8.2 4.5V16M12.2 4.5V16M4.5 8.2H16M4.5 12.2H16" stroke="#fbfdff" stroke-width="1.15"/></svg>
<div style="left:205px;top:682.0px;width:5.0px;height:17px;background:#e8e8e8;border:1px solid #c9c9c9;border-radius:2px;"></div>
<span class="t" style='left:74.50px;top:683.00px;font-size:12px;line-height:16px;color:#585858;letter-spacing:-0.162px;'>mantis_tokens_table</span>
<span class="t" style='left:236.70px;top:683.00px;font-size:12px;line-height:16px;color:#585858;letter-spacing:-0.600px;'>3,4 KiB</span>
<svg style="left:52px;top:703.0px;" width="16" height="16" viewBox="0 0 16 16"><rect x="0" y="0" width="16" height="16" rx="1" fill="#6fd6e3"/><rect x="4.5" y="4.5" width="11.5" height="11.5" fill="#d3e6fb"/><path d="M4.2 0V4.5M8.2 0V4.5M12.2 0V4.5M0 4.2H4.5M0 8.2H4.5M0 12.2H4.5" stroke="#52c8d8" stroke-width="0.9"/><path d="M8.2 4.5V16M12.2 4.5V16M4.5 8.2H16M4.5 12.2H16" stroke="#fbfdff" stroke-width="1.15"/></svg>
<div style="left:205px;top:702.0px;width:3.5px;height:17px;background:#e8e8e8;border:1px solid #c9c9c9;border-radius:2px;"></div>
<span class="t" style='left:74.50px;top:703.00px;font-size:12px;line-height:16px;color:#585858;letter-spacing:-0.246px;'>mantis_user_pref_table</span>
<span class="t" style='left:236.70px;top:703.00px;font-size:12px;line-height:16px;color:#585858;letter-spacing:-0.600px;'>2,2 KiB</span>
<svg style="left:52px;top:723.0px;" width="16" height="16" viewBox="0 0 16 16"><rect x="0" y="0" width="16" height="16" rx="1" fill="#6fd6e3"/><rect x="4.5" y="4.5" width="11.5" height="11.5" fill="#d3e6fb"/><path d="M4.2 0V4.5M8.2 0V4.5M12.2 0V4.5M0 4.2H4.5M0 8.2H4.5M0 12.2H4.5" stroke="#52c8d8" stroke-width="0.9"/><path d="M8.2 4.5V16M12.2 4.5V16M4.5 8.2H16M4.5 12.2H16" stroke="#fbfdff" stroke-width="1.15"/></svg>
<div style="left:205px;top:722.0px;width:2px;height:17px;background:#cfcfcf;border-radius:1px;"></div>
<span class="t" style='left:74.50px;top:723.00px;font-size:12px;line-height:16px;color:#585858;letter-spacing:-0.267px;'>mantis_user_print_pre...</span>
<span class="t" style='left:236.70px;top:723.00px;font-size:12px;line-height:16px;color:#585858;letter-spacing:-0.600px;'>1,0 KiB</span>
<svg style="left:52px;top:743.0px;" width="16" height="16" viewBox="0 0 16 16"><rect x="0" y="0" width="16" height="16" rx="1" fill="#6fd6e3"/><rect x="4.5" y="4.5" width="11.5" height="11.5" fill="#d3e6fb"/><path d="M4.2 0V4.5M8.2 0V4.5M12.2 0V4.5M0 4.2H4.5M0 8.2H4.5M0 12.2H4.5" stroke="#52c8d8" stroke-width="0.9"/><path d="M8.2 4.5V16M12.2 4.5V16M4.5 8.2H16M4.5 12.2H16" stroke="#fbfdff" stroke-width="1.15"/></svg>
<div style="left:205px;top:742.0px;width:2px;height:17px;background:#cfcfcf;border-radius:1px;"></div>
<span class="t" style='left:74.50px;top:743.00px;font-size:12px;line-height:16px;color:#585858;letter-spacing:-0.256px;'>mantis_user_profile_ta...</span>
<span class="t" style='left:236.70px;top:743.00px;font-size:12px;line-height:16px;color:#585858;letter-spacing:-0.600px;'>1,0 KiB</span>
<svg style="left:52px;top:763.0px;" width="16" height="16" viewBox="0 0 16 16"><rect x="0" y="0" width="16" height="16" rx="1" fill="#6fd6e3"/><rect x="4.5" y="4.5" width="11.5" height="11.5" fill="#d3e6fb"/><path d="M4.2 0V4.5M8.2 0V4.5M12.2 0V4.5M0 4.2H4.5M0 8.2H4.5M0 12.2H4.5" stroke="#52c8d8" stroke-width="0.9"/><path d="M8.2 4.5V16M12.2 4.5V16M4.5 8.2H16M4.5 12.2H16" stroke="#fbfdff" stroke-width="1.15"/></svg>
<div style="left:205px;top:762.0px;width:22.5px;height:17px;background:#e8e8e8;border:1px solid #c9c9c9;border-radius:2px;"></div>
<span class="t" style='left:74.50px;top:763.00px;font-size:12px;line-height:16px;color:#585858;letter-spacing:-0.239px;'>mantis_user_table</span>
<span class="t" style='left:230.69px;top:763.00px;font-size:12px;line-height:16px;color:#585858;letter-spacing:-0.609px;'>14,7 KiB</span>
<svg style="left:32px;top:786px;" width="6" height="9" viewBox="0 0 6 9"><path d="M0.6 0.8 L4.9 4.4 L0.6 8 Z" fill="#fff" stroke="#a6a6a6" stroke-width="1"/></svg>
<svg style="left:41px;top:783px;" width="15" height="16" viewBox="0 0 15 16"><rect x="0" y="0" width="14" height="4.4" rx="0.8" fill="#dcd3ee"/><rect x="0" y="5.4" width="14" height="4.4" rx="0.8" fill="#dcd3ee"/><rect x="0" y="10.8" width="14" height="4.4" rx="0.8" fill="#dcd3ee"/></svg>
<span class="t" style='left:62.60px;top:783.00px;font-size:12px;line-height:16px;color:#585858;letter-spacing:0.094px;'>methodstools</span>
<svg style="left:19px;top:808px;" width="7" height="6" viewBox="0 0 7 6"><path d="M6.3 0 V5.3 H0.3 Z" fill="#2a2a2a"/></svg>
<svg style="left:29px;top:803px;" width="16" height="16" viewBox="0 0 16 16"><path d="M1 1.5 C3 0.5 6.5 2.5 8.5 6 C10 8.8 11 10.5 13.8 12.2 L11.8 12.4 L13.8 14.2 C10.5 13.6 8.6 11.5 7 9 C6.3 7.9 5.2 7.8 4.2 8.8 L4.3 11 L3 9.6 C2.4 6.5 2.8 3.5 1 1.5 Z" fill="none" stroke="#4e9fc0" stroke-width="0.9" stroke-linejoin="round"/></svg>
<span class="t" style='left:50.70px;top:803.00px;font-size:12px;line-height:16px;color:#000;font-weight:bold;letter-spacing:-0.425px;'>MT Local DB</span>
<span class="t" style='left:236.70px;top:803.00px;font-size:12px;line-height:16px;color:#000;letter-spacing:-0.600px;'>1,0 KiB</span>
<svg style="left:31px;top:828px;" width="7" height="6" viewBox="0 0 7 6"><path d="M6.3 0 V5.3 H0.3 Z" fill="#2a2a2a"/></svg>
<svg style="left:41px;top:823px;" width="15" height="16" viewBox="0 0 15 16"><rect x="0" y="0" width="14" height="4.4" rx="0.8" fill="#d1c4e9"/><rect x="0" y="5.4" width="14" height="4.4" rx="0.8" fill="#d1c4e9"/><rect x="0" y="10.8" width="14" height="4.4" rx="0.8" fill="#d1c4e9"/><circle cx="10.3" cy="10.6" r="4.4" fill="#b6dfb8"/><path d="M8.1 10.7 L9.7 12.3 L12.6 8.8" fill="none" stroke="#3f9f44" stroke-width="1.3"/></svg>
<span class="t" style='left:62.60px;top:823.00px;font-size:12px;line-height:16px;color:#000;font-weight:bold;letter-spacing:-0.223px;'>methodstools</span>
<span class="t" style='left:236.70px;top:823.00px;font-size:12px;line-height:16px;color:#000;letter-spacing:-0.600px;'>1,0 KiB</span>
<svg style="left:52px;top:843px;" width="16" height="15" viewBox="0 0 16 15"><path d="M4.6 3.8 L1.2 7.5 L4.6 11.2 M11 3.8 L14.4 7.5 L11 11.2" fill="none" stroke="#7fb2ea" stroke-width="1.3"/><path d="M9.3 2 L6.3 13" stroke="#7fb2ea" stroke-width="1.3"/></svg>
<span class="t" style='left:74.50px;top:843.00px;font-size:12px;line-height:16px;color:#000;letter-spacing:-0.186px;'>procedure 1</span>
<svg style="left:52px;top:863.0px;" width="16" height="16" viewBox="0 0 16 16"><rect x="0" y="0" width="16" height="16" rx="1" fill="#12b0c8"/><rect x="4.5" y="4.5" width="11.5" height="11.5" fill="#c3dbf8"/><path d="M4.2 0V4.5M8.2 0V4.5M12.2 0V4.5M0 4.2H4.5M0 8.2H4.5M0 12.2H4.5" stroke="#0a9cb4" stroke-width="0.9"/><path d="M8.2 4.5V16M12.2 4.5V16M4.5 8.2H16M4.5 12.2H16" stroke="#fbfdff" stroke-width="1.15"/></svg>
<div style="left:205px;top:862.0px;width:69.5px;height:17px;background:#d9d9d9;border:1px solid #b9b9b9;border-radius:2px;"></div>
<span class="t" style='left:74.50px;top:863.00px;font-size:12px;line-height:16px;color:#000;font-weight:bold;letter-spacing:-0.019px;'>test table</span>
<span class="t" style='left:236.70px;top:863.00px;font-size:12px;line-height:16px;color:#505050;letter-spacing:-0.600px;'>1,0 KiB</span>
<div style="left:282px;top:99px;width:1644px;height:819px;background:#fff;border:1px solid #a0a0a0;"></div>
<div style="left:284px;top:79px;width:110px;height:21px;background:linear-gradient(#f0f0f0,#ececec 50%,#e4e4e4);border:1px solid #acacac;"></div>
<div style="left:394px;top:79px;width:160px;height:21px;background:linear-gradient(#f0f0f0,#ececec 50%,#e4e4e4);border:1px solid #acacac;"></div>
<div style="left:673px;top:79px;width:57px;height:21px;background:linear-gradient(#f0f0f0,#ececec 50%,#e4e4e4);border:1px solid #acacac;"></div>
<div style="left:730px;top:79px;width:64px;height:21px;background:linear-gradient(#f0f0f0,#ececec 50%,#e4e4e4);border:1px solid #acacac;"></div>
<div style="left:553px;top:77px;width:121px;height:23px;background:#fff;border:1px solid #acacac;border-bottom:none;"></div>
<span class="t" style='left:312.50px;top:82.00px;font-size:12px;line-height:16px;color:#000;letter-spacing:-0.459px;'>Host: 127.0.0.1</span>
<span class="t" style='left:422.50px;top:82.00px;font-size:12px;line-height:16px;color:#000;letter-spacing:-0.133px;'>Database: methodstools</span>
<span class="t" style='left:583.70px;top:80.00px;font-size:12px;line-height:16px;color:#000;letter-spacing:-0.110px;'>Table: test table</span>
<span class="t" style='left:700.40px;top:82.00px;font-size:12px;line-height:16px;color:#000;letter-spacing:-0.640px;'>Data</span>
<span class="t" style='left:758.50px;top:82.00px;font-size:12px;line-height:16px;color:#000;letter-spacing:-0.277px;'>Query</span>
<svg style="left:293.5px;top:81px;" width="9" height="16" viewBox="0 0 9 16"><rect x="0" y="0" width="9" height="16" rx="0.8" fill="#1f5a85"/><path d="M1.2 2.2h6.6M1.2 4.6h6.6M1.2 7h6.6" stroke="#163f5e" stroke-width="1.3"/><rect x="0" y="9.3" width="9" height="6.7" rx="0.8" fill="#2196f3"/><rect x="3.8" y="13" width="1.4" height="1.2" fill="#bbdefb"/></svg>
<svg style="left:401px;top:81.5px;" width="15" height="16" viewBox="0 0 15 16"><rect x="0" y="0" width="14" height="4.4" rx="0.8" fill="#d1c4e9"/><rect x="0" y="5.4" width="14" height="4.4" rx="0.8" fill="#d1c4e9"/><rect x="0" y="10.8" width="14" height="4.4" rx="0.8" fill="#d1c4e9"/></svg>
<svg style="left:561px;top:79px;" width="16" height="16" viewBox="0 0 16 16"><rect x="0" y="0" width="16" height="16" rx="1" fill="#12b0c8"/><rect x="4.5" y="4.5" width="11.5" height="11.5" fill="#c3dbf8"/><path d="M4.2 0V4.5M8.2 0V4.5M12.2 0V4.5M0 4.2H4.5M0 8.2H4.5M0 12.2H4.5" stroke="#0a9cb4" stroke-width="0.9"/><path d="M8.2 4.5V16M12.2 4.5V16M4.5 8.2H16M4.5 12.2H16" stroke="#fbfdff" stroke-width="1.15"/></svg>
<svg style="left:678.3px;top:79.5px;" width="16" height="15" viewBox="0 0 16 15"><rect x="0.7" y="0.7" width="14.2" height="13.6" rx="1.5" fill="#e3f0fd" stroke="#64b5f6" stroke-width="1.4"/><path d="M5.4 0.7V14.3M10.2 0.7V14.3M0.7 5.2H14.9M0.7 9.8H14.9" stroke="#64b5f6" stroke-width="1.2"/></svg>
<svg style="left:736.4px;top:80px;" width="15" height="15" viewBox="0 0 15 15"><path d="M0.5 0.5 V14.5 L14.5 7.5 Z" fill="#2196f3"/></svg>
<svg style="left:802px;top:80.5px;" width="17" height="16" viewBox="0 0 17 16"><rect x="0.6" y="0.6" width="11.8" height="11" fill="#f3f8fe" stroke="#90c2f0" stroke-width="1.1"/><path d="M2.5 3h5M2.5 5.2h8M2.5 7.4h8M2.5 9.4h5" stroke="#a9cff3" stroke-width="0.9"/><circle cx="12.3" cy="11.8" r="3.6" fill="#43a047"/><path d="M12.3 9.8v4M10.3 11.8h4" stroke="#fff" stroke-width="1.1"/></svg>
<div style="left:291px;top:108px;width:61px;height:21px;background:linear-gradient(#f0f0f0,#ececec 50%,#e4e4e4);border:1px solid #acacac;"></div>
<span class="t" style='left:319.30px;top:111.00px;font-size:12px;line-height:16px;color:#000;letter-spacing:-0.569px;'>Basic</span>
<div style="left:352px;top:108px;width:76px;height:21px;background:linear-gradient(#f0f0f0,#ececec 50%,#e4e4e4);border:1px solid #acacac;"></div>
<span class="t" style='left:380.50px;top:111.00px;font-size:12px;line-height:16px;color:#000;letter-spacing:-0.023px;'>Options</span>
<div style="left:428px;top:108px;width:90px;height:21px;background:linear-gradient(#f0f0f0,#ececec 50%,#e4e4e4);border:1px solid #acacac;"></div>
<span class="t" style='left:456.50px;top:111.00px;font-size:12px;line-height:16px;color:#000;letter-spacing:-0.476px;'>Indexes (0)</span>
<div style="left:518px;top:108px;width:117px;height:21px;background:linear-gradient(#f0f0f0,#ececec 50%,#e4e4e4);border:1px solid #acacac;"></div>
<span class="t" style='left:546.20px;top:111.00px;font-size:12px;line-height:16px;color:#000;letter-spacing:-0.269px;'>Foreign keys (0)</span>
<div style="left:635px;top:108px;width:145px;height:21px;background:linear-gradient(#f0f0f0,#ececec 50%,#e4e4e4);border:1px solid #acacac;"></div>
<span class="t" style='left:663.60px;top:111.00px;font-size:12px;line-height:16px;color:#000;letter-spacing:-0.161px;'>Check constraints (0)</span>
<div style="left:780px;top:108px;width:83px;height:21px;background:linear-gradient(#f0f0f0,#ececec 50%,#e4e4e4);border:1px solid #acacac;"></div>
<span class="t" style='left:808.40px;top:111.00px;font-size:12px;line-height:16px;color:#000;letter-spacing:-0.043px;'>Partitions</span>
<div style="left:970px;top:108px;width:94px;height:21px;background:linear-gradient(#f0f0f0,#ececec 50%,#e4e4e4);border:1px solid #acacac;"></div>
<span class="t" style='left:997.30px;top:111.00px;font-size:12px;line-height:16px;color:#000;letter-spacing:-0.466px;'>ALTER code</span>
<div style="left:862px;top:106px;width:109px;height:23px;background:#fff;border:1px solid #acacac;border-bottom:none;"></div>
<span class="t" style='left:892.70px;top:109.00px;font-size:12px;line-height:16px;color:#000;letter-spacing:-0.604px;'>CREATE code</span>
<svg style="left:297px;top:110px;" width="16" height="16" viewBox="0 0 16 16"><rect x="0" y="0" width="16" height="16" rx="1" fill="#12b0c8"/><rect x="4.5" y="4.5" width="11.5" height="11.5" fill="#c3dbf8"/><path d="M4.2 0V4.5M8.2 0V4.5M12.2 0V4.5M0 4.2H4.5M0 8.2H4.5M0 12.2H4.5" stroke="#0a9cb4" stroke-width="0.9"/><path d="M8.2 4.5V16M12.2 4.5V16M4.5 8.2H16M4.5 12.2H16" stroke="#fbfdff" stroke-width="1.15"/></svg>
<svg style="left:357.5px;top:109.5px;" width="17" height="17" viewBox="0 0 16 16"><path d="M14.8 4.6 a4 4 0 0 1 -5.3 3.8 L3.6 14.6 a1.5 1.5 0 0 1 -2.2 -2.2 L7.6 6.5 a4 4 0 0 1 3.8 -5.3 a4 4 0 0 1 1.2 0.2 L10.3 3.7 L12.3 5.7 L14.6 3.4 a4 4 0 0 1 0.2 1.2z" fill="#607d8b"/></svg>
<svg style="left:437px;top:110.5px;" width="10" height="16" viewBox="0 0 10 16"><path d="M3.4 0.5 H8.6 L6 6 H9.4 L2.2 15.5 L3.8 8.6 H0.6 Z" fill="#cf22f6"/></svg>
<svg style="left:524px;top:111px;" width="16" height="15" viewBox="0 0 16 15"><rect x="0.5" y="1" width="4.6" height="13" fill="#dbeefd" stroke="#6ab7f5" stroke-width="0.9"/><rect x="10.9" y="1" width="4.6" height="13" fill="#dbeefd" stroke="#6ab7f5" stroke-width="0.9"/><path d="M0.5 4.2h4.6M0.5 7.4h4.6M0.5 10.6h4.6M10.9 4.2h4.6M10.9 7.4h4.6M10.9 10.6h4.6" stroke="#6ab7f5" stroke-width="0.8"/><path d="M5 12.5 C8 12.5 8 2.5 11 2.5" fill="none" stroke="#1495b5" stroke-width="1.5"/></svg>
<svg style="left:641px;top:110.5px;" width="16" height="16" viewBox="0 0 16 16"><circle cx="8" cy="8" r="7.8" fill="#c8e6c9"/><path d="M4.4 8.2 L7 10.7 L11.6 5.4" fill="none" stroke="#43a047" stroke-width="1.6"/></svg>
<svg style="left:786px;top:110.5px;" width="16" height="16" viewBox="0 0 16 16"><circle cx="8" cy="8" r="7.8" fill="#1fb6d4"/><path d="M8 8 V0.2 A7.8 7.8 0 0 1 15.8 8 Z" fill="#3d8bf5"/><path d="M8 8 H15.8 A7.8 7.8 0 0 1 13 14 Z" fill="#3f51b5"/></svg>
<svg style="left:870.5px;top:108px;" width="15" height="14" viewBox="0 0 15 14"><path d="M4.4 3.4 L1 7.2 L4.4 11 M10.6 3.4 L14 7.2 L10.6 11" fill="none" stroke="#2f8de4" stroke-width="1.35"/><path d="M9 1.6 L6 12.8" stroke="#2f8de4" stroke-width="1.35"/></svg>
<svg style="left:975.3px;top:110.5px;" width="15" height="14" viewBox="0 0 15 14"><path d="M4.4 3.4 L1 7.2 L4.4 11 M10.6 3.4 L14 7.2 L10.6 11" fill="none" stroke="#2f8de4" stroke-width="1.35"/><path d="M9 1.6 L6 12.8" stroke="#2f8de4" stroke-width="1.35"/></svg>
<div style="left:289px;top:128px;width:1630px;height:127px;background:#fff;border:1px solid #a6a6a6;"></div>
<div style="left:293px;top:132px;width:1624px;height:119px;background:#fff;border:1px solid #a6a6a6;"></div>
<div style="left:863px;top:128px;width:107px;height:1px;background:#fff;"></div>
<div style="left:295px;top:134px;width:47px;height:116px;background:#ededed;"></div>
<div style="left:906px;top:133px;width:1px;height:117px;background:#c0c0c0;"></div>
<div style="left:1899px;top:133px;width:17px;height:117px;background:#f0f0f0;"></div>
<div style="left:1899px;top:151px;width:16px;height:55px;background:#cdcdcd;"></div>
<svg style="left:1901px;top:138px;" width="12" height="8" viewBox="0 0 12 8"><path d="M2 6.5 L6 2.5 L10 6.5" fill="none" stroke="#404040" stroke-width="1.6"/></svg>
<svg style="left:1901px;top:237px;" width="12" height="8" viewBox="0 0 12 8"><path d="M2 1.5 L6 5.5 L10 1.5" fill="none" stroke="#404040" stroke-width="1.6"/></svg>
<div class='code' style='left:346.6px;top:135.00px;font-family:"Liberation Mono", monospace;font-size:12.4px;line-height:14px;letter-spacing:-0.44px;white-space:pre;'><span style="color:#0000c8;font-weight:bold">CREATE TABLE</span><span style="color:#000"> </span><span style="color:#808000">`test table`</span><span style="color:#000"> </span><span style="color:#0000ff">(</span></div>
<span class="t" style='left:316.86px;top:134.00px;font-size:12.4px;line-height:17px;color:#5a5a5a;font-family:"Liberation Mono", monospace;letter-spacing:-0.440px;'>1</span>
<div class='code' style='left:346.6px;top:149.00px;font-family:"Liberation Mono", monospace;font-size:12.4px;line-height:14px;letter-spacing:-0.44px;white-space:pre;'><span style="color:#000">   </span><span style="color:#808000">`Index1`</span><span style="color:#000"> </span><span style="color:#800000;font-weight:bold">INT</span><span style="color:#0000ff">(</span><span style="color:#800080">8</span><span style="color:#0000ff">)</span><span style="color:#000"> </span><span style="color:#0000c8;font-weight:bold">NOT NULL</span><span style="color:#0000ff">,</span></div>
<span class="t" style='left:316.86px;top:148.00px;font-size:12.4px;line-height:17px;color:#5a5a5a;font-family:"Liberation Mono", monospace;letter-spacing:-0.440px;'>2</span>
<div class='code' style='left:346.6px;top:163.00px;font-family:"Liberation Mono", monospace;font-size:12.4px;line-height:14px;letter-spacing:-0.44px;white-space:pre;'><span style="color:#000">   </span><span style="color:#808000">`Name`</span><span style="color:#000"> </span><span style="color:#800000;font-weight:bold">VARCHAR</span><span style="color:#0000ff">(</span><span style="color:#800080">50</span><span style="color:#0000ff">)</span><span style="color:#000"> </span><span style="color:#0000c8;font-weight:bold">NOT NULL COLLATE</span><span style="color:#000"> </span><span style="color:#008000">&#x27;latin1_swedish_ci&#x27;</span><span style="color:#0000ff">,</span></div>
<span class="t" style='left:316.86px;top:162.00px;font-size:12.4px;line-height:17px;color:#5a5a5a;font-family:"Liberation Mono", monospace;letter-spacing:-0.440px;'>3</span>
<div class='code' style='left:346.6px;top:177.00px;font-family:"Liberation Mono", monospace;font-size:12.4px;line-height:14px;letter-spacing:-0.44px;white-space:pre;'><span style="color:#000">   </span><span style="color:#808000">`Column 3`</span><span style="color:#000"> </span><span style="color:#800000;font-weight:bold">TEXT</span><span style="color:#000"> </span><span style="color:#0000c8;font-weight:bold">NOT NULL COLLATE</span><span style="color:#000"> </span><span style="color:#008000">&#x27;latin1_swedish_ci&#x27;</span><span style="color:#0000ff">,</span></div>
<span class="t" style='left:316.86px;top:176.00px;font-size:12.4px;line-height:17px;color:#5a5a5a;font-family:"Liberation Mono", monospace;letter-spacing:-0.440px;'>4</span>
<div class='code' style='left:346.6px;top:191.00px;font-family:"Liberation Mono", monospace;font-size:12.4px;line-height:14px;letter-spacing:-0.44px;white-space:pre;'><span style="color:#000">   </span><span style="color:#808000">`Column 4`</span><span style="color:#000"> </span><span style="color:#800000;font-weight:bold">FLOAT</span><span style="color:#000"> </span><span style="color:#0000c8;font-weight:bold">NULL DEFAULT NULL</span><span style="color:#0000ff">,</span></div>
<span class="t" style='left:316.86px;top:190.00px;font-size:12.4px;line-height:17px;color:#5a5a5a;font-family:"Liberation Mono", monospace;letter-spacing:-0.440px;'>5</span>
<div class='code' style='left:346.6px;top:205.00px;font-family:"Liberation Mono", monospace;font-size:12.4px;line-height:14px;letter-spacing:-0.44px;white-space:pre;'><span style="color:#000">   </span><span style="color:#808000">`Column 5`</span><span style="color:#000"> </span><span style="color:#800000;font-weight:bold">VARCHAR</span><span style="color:#0000ff">(</span><span style="color:#800080">50</span><span style="color:#0000ff">)</span><span style="color:#000"> </span><span style="color:#0000c8;font-weight:bold">NULL DEFAULT NULL</span></div>
<span class="t" style='left:316.86px;top:204.00px;font-size:12.4px;line-height:17px;color:#5a5a5a;font-family:"Liberation Mono", monospace;letter-spacing:-0.440px;'>6</span>
<div class='code' style='left:346.6px;top:219.00px;font-family:"Liberation Mono", monospace;font-size:12.4px;line-height:14px;letter-spacing:-0.44px;white-space:pre;'><span style="color:#0000ff">)</span></div>
<span class="t" style='left:316.86px;top:218.00px;font-size:12.4px;line-height:17px;color:#5a5a5a;font-family:"Liberation Mono", monospace;letter-spacing:-0.440px;'>7</span>
<div class='code' style='left:346.6px;top:233.00px;font-family:"Liberation Mono", monospace;font-size:12.4px;line-height:14px;letter-spacing:-0.44px;white-space:pre;'><span style="color:#0000c8;font-weight:bold">COMMENT</span><span style="color:#0000ff">=</span><span style="color:#008000">&#x27;Test Table HeidiSQL&#x27;</span></div>
<span class="t" style='left:316.86px;top:232.00px;font-size:12.4px;line-height:17px;color:#5a5a5a;font-family:"Liberation Mono", monospace;letter-spacing:-0.440px;'>8</span>
<div style='left:294px;top:246px;width:1600px;height:4.5px;overflow:hidden;'>
<div class='code' style='left:52.6px;top:1.00px;font-family:"Liberation Mono", monospace;font-size:12.4px;line-height:14px;letter-spacing:-0.44px;white-space:pre;'><span style="color:#0000c8;font-weight:bold">COLLATE</span><span style="color:#0000ff">=</span><span style="color:#008000">&#x27;latin1_swedish_ci&#x27;</span></div>
<span class='t' style='left:23.3px;top:1px;font-family:"Liberation Mono", monospace;font-size:12.4px;letter-spacing:-0.44px;line-height:14px;color:#5a5a5a'>9</span>
</div>
<div style="left:289px;top:255px;width:1632px;height:9px;background:#f0f0f0;"></div>
<span class="t" style='left:289.80px;top:267.00px;font-size:12px;line-height:16px;color:#000;letter-spacing:-0.148px;'>Columns:</span>
<svg style="left:392px;top:267px;" width="16" height="16" viewBox="0 0 16 16"><circle cx="8" cy="8" r="7.7" fill="#4caf50"/><path d="M8 4v8M4 8h8" stroke="#fff" stroke-width="2.2"/></svg>
<span class="t" style='left:412.60px;top:267.00px;font-size:12px;line-height:16px;color:#000;letter-spacing:-0.120px;'>Add</span>
<svg style="left:462px;top:267px;" width="16" height="16" viewBox="0 0 16 16"><circle cx="8" cy="8" r="7.7" fill="#ea4037"/><path d="M5.2 5.2l5.6 5.6M10.8 5.2l-5.6 5.6" stroke="#fff" stroke-width="2"/></svg>
<span class="t" style='left:482.30px;top:267.00px;font-size:12px;line-height:16px;color:#000;letter-spacing:-0.331px;'>Remove</span>
<svg style="left:532px;top:270px;" width="16" height="10" viewBox="0 0 16 10"><path d="M0.8 9.5 L8 0.8 L15.2 9.5 Z" fill="#2196f3"/></svg>
<span class="t" style='left:552.00px;top:267.00px;font-size:12px;line-height:16px;color:#000;letter-spacing:-0.172px;'>Up</span>
<svg style="left:602px;top:270px;" width="16" height="10" viewBox="0 0 16 10"><path d="M0.8 0.8 L8 9.5 L15.2 0.8 Z" fill="#8a8a8a"/></svg>
<span class="t" style='left:622.00px;top:267.00px;font-size:12px;line-height:16px;color:#a6a6a6;letter-spacing:-0.047px;'>Down</span>
<div style="left:289px;top:289px;width:1632px;height:594px;background:#fff;border:1px solid #a6a6a6;"></div>
<div style="left:290.5px;top:290px;width:1629px;height:20px;background:#fcfcfc;border-bottom:1px solid #e3e8f3;"></div>
<div style="left:311.5px;top:291px;width:1px;height:19px;background:#e3e8f3;"></div>
<span class="t" style='left:300.00px;top:293.00px;font-size:12px;line-height:16px;color:#000;'>#</span>
<div style="left:411.5px;top:291px;width:1px;height:19px;background:#e3e8f3;"></div>
<span class="t" style='left:319.50px;top:293.00px;font-size:12px;line-height:16px;color:#000;letter-spacing:0.371px;'>Name</span>
<div style="left:568.0px;top:291px;width:1px;height:19px;background:#e3e8f3;"></div>
<span class="t" style='left:419.50px;top:293.00px;font-size:12px;line-height:16px;color:#000;letter-spacing:-0.066px;'>Datatype</span>
<div style="left:658.0px;top:291px;width:1px;height:19px;background:#e3e8f3;"></div>
<span class="t" style='left:575.20px;top:293.00px;font-size:12px;line-height:16px;color:#000;letter-spacing:-0.006px;'>Length/Set</span>
<div style="left:718.0px;top:291px;width:1px;height:19px;background:#e3e8f3;"></div>
<span class="t" style='left:666.00px;top:293.00px;font-size:12px;line-height:16px;color:#000;letter-spacing:-0.095px;'>Unsign...</span>
<div style="left:782.5px;top:291px;width:1px;height:19px;background:#e3e8f3;"></div>
<span class="t" style='left:726.30px;top:293.00px;font-size:12px;line-height:16px;color:#000;letter-spacing:-0.019px;'>Allow N...</span>
<div style="left:833.0px;top:291px;width:1px;height:19px;background:#e3e8f3;"></div>
<span class="t" style='left:790.00px;top:293.00px;font-size:12px;line-height:16px;color:#000;letter-spacing:0.186px;'>Zerofill</span>
<div style="left:951.5px;top:291px;width:1px;height:19px;background:#e3e8f3;"></div>
<span class="t" style='left:840.00px;top:293.00px;font-size:12px;line-height:16px;color:#000;letter-spacing:-0.004px;'>Default</span>
<div style="left:1082.0px;top:291px;width:1px;height:19px;background:#e3e8f3;"></div>
<span class="t" style='left:959.50px;top:293.00px;font-size:12px;line-height:16px;color:#000;letter-spacing:0.283px;'>Comment</span>
<div style="left:1222.0px;top:291px;width:1px;height:19px;background:#e3e8f3;"></div>
<span class="t" style='left:1089.40px;top:293.00px;font-size:12px;line-height:16px;color:#000;letter-spacing:0.144px;'>Collation</span>
<div style="left:1322.0px;top:291px;width:1px;height:19px;background:#e3e8f3;"></div>
<span class="t" style='left:1229.30px;top:293.00px;font-size:12px;line-height:16px;color:#000;letter-spacing:-0.388px;'>Expression</span>
<div style="left:1421.8px;top:291px;width:1px;height:19px;background:#e3e8f3;"></div>
<span class="t" style='left:1329.00px;top:293.00px;font-size:12px;line-height:16px;color:#000;letter-spacing:0.120px;'>Virtuality</span>
<div style="left:291px;top:311px;width:21px;height:99px;background:#f0f0f0;"></div>
<div style="left:291px;top:330.0px;width:1131px;height:1px;background:repeating-linear-gradient(90deg,#dcdcdc 0 1px,transparent 1px 2px);"></div>
<div style="left:291px;top:350.0px;width:1131px;height:1px;background:repeating-linear-gradient(90deg,#dcdcdc 0 1px,transparent 1px 2px);"></div>
<div style="left:291px;top:370.0px;width:1131px;height:1px;background:repeating-linear-gradient(90deg,#dcdcdc 0 1px,transparent 1px 2px);"></div>
<div style="left:291px;top:390.0px;width:1131px;height:1px;background:repeating-linear-gradient(90deg,#dcdcdc 0 1px,transparent 1px 2px);"></div>
<div style="left:311.5px;top:311px;width:1px;height:80px;background:repeating-linear-gradient(#dcdcdc 0 1px,transparent 1px 2px);"></div>
<div style="left:411.5px;top:311px;width:1px;height:80px;background:repeating-linear-gradient(#dcdcdc 0 1px,transparent 1px 2px);"></div>
<div style="left:568.0px;top:311px;width:1px;height:80px;background:repeating-linear-gradient(#dcdcdc 0 1px,transparent 1px 2px);"></div>
<div style="left:658.0px;top:311px;width:1px;height:80px;background:repeating-linear-gradient(#dcdcdc 0 1px,transparent 1px 2px);"></div>
<div style="left:718.0px;top:311px;width:1px;height:80px;background:repeating-linear-gradient(#dcdcdc 0 1px,transparent 1px 2px);"></div>
<div style="left:782.5px;top:311px;width:1px;height:80px;background:repeating-linear-gradient(#dcdcdc 0 1px,transparent 1px 2px);"></div>
<div style="left:833.0px;top:311px;width:1px;height:80px;background:repeating-linear-gradient(#dcdcdc 0 1px,transparent 1px 2px);"></div>
<div style="left:951.5px;top:311px;width:1px;height:80px;background:repeating-linear-gradient(#dcdcdc 0 1px,transparent 1px 2px);"></div>
<div style="left:1082.0px;top:311px;width:1px;height:80px;background:repeating-linear-gradient(#dcdcdc 0 1px,transparent 1px 2px);"></div>
<div style="left:1222.0px;top:311px;width:1px;height:80px;background:repeating-linear-gradient(#dcdcdc 0 1px,transparent 1px 2px);"></div>
<div style="left:1322.0px;top:311px;width:1px;height:80px;background:repeating-linear-gradient(#dcdcdc 0 1px,transparent 1px 2px);"></div>
<div style="left:1421.8px;top:311px;width:1px;height:80px;background:repeating-linear-gradient(#dcdcdc 0 1px,transparent 1px 2px);"></div>
<div style="left:291px;top:391px;width:20.5px;height:19px;background:#ebebeb;border:1px solid #d9d9d9;"></div>
<div style="left:312.5px;top:391px;width:98.5px;height:19px;background:#f6f6f6;border:1px solid #dbdbdb;"></div>
<div style="left:412.5px;top:391px;width:155.0px;height:19px;background:#f6f6f6;border:1px solid #dbdbdb;"></div>
<div style="left:569.0px;top:391px;width:88.5px;height:19px;background:#f6f6f6;border:1px solid #dbdbdb;"></div>
<div style="left:659.0px;top:391px;width:58.5px;height:19px;background:#f6f6f6;border:1px solid #dbdbdb;"></div>
<div style="left:719.0px;top:391px;width:63.0px;height:19px;background:#f6f6f6;border:1px solid #dbdbdb;"></div>
<div style="left:783.5px;top:391px;width:49.0px;height:19px;background:#f6f6f6;border:1px solid #dbdbdb;"></div>
<div style="left:834.0px;top:391px;width:117.0px;height:19px;background:#f6f6f6;border:1px solid #dbdbdb;"></div>
<div style="left:952.5px;top:391px;width:129.0px;height:19px;background:#f6f6f6;border:1px solid #dbdbdb;"></div>
<div style="left:1083.0px;top:391px;width:138.5px;height:19px;background:#f6f6f6;border:1px solid #dbdbdb;"></div>
<div style="left:1223.0px;top:391px;width:98.5px;height:19px;background:#f6f6f6;border:1px solid #dbdbdb;"></div>
<div style="left:1323.0px;top:391px;width:98.29999999999995px;height:19px;background:#f6f6f6;border:1px solid #dbdbdb;"></div>
<span class="t" style='left:300.61px;top:313.00px;font-size:12px;line-height:16px;color:#000;'>1</span>
<span class="t" style='left:323.30px;top:313.00px;font-size:12px;line-height:16px;color:#000;letter-spacing:-0.589px;'>Index1</span>
<span class="t" style='left:423.30px;top:313.00px;font-size:12px;line-height:16px;color:#2222bb;letter-spacing:-0.115px;'>INT</span>
<span class="t" style='left:579.30px;top:313.00px;font-size:12px;line-height:16px;color:#000;'>8</span>
<div style="left:681.25px;top:313.4px;width:15.5px;height:15px;background:#dff1fd;border:2px solid #3b97e3;border-radius:2.5px;"></div>
<div style="left:743.05px;top:313.4px;width:15.5px;height:15px;background:#dff1fd;border:2px solid #3b97e3;border-radius:2.5px;"></div>
<div style="left:801.05px;top:313.4px;width:15.5px;height:15px;background:#dff1fd;border:2px solid #3b97e3;border-radius:2.5px;"></div>
<span class="t" style='left:844.50px;top:313.00px;font-size:12px;line-height:16px;color:#b9b3dc;letter-spacing:0.130px;'>No default</span>
<span class="t" style='left:300.61px;top:333.00px;font-size:12px;line-height:16px;color:#000;'>2</span>
<span class="t" style='left:323.30px;top:333.00px;font-size:12px;line-height:16px;color:#000;letter-spacing:-0.004px;'>Name</span>
<span class="t" style='left:423.30px;top:333.00px;font-size:12px;line-height:16px;color:#267f26;letter-spacing:-0.471px;'>VARCHAR</span>
<span class="t" style='left:579.30px;top:333.00px;font-size:12px;line-height:16px;color:#000;'>50</span>
<div style="left:681.25px;top:333.4px;width:15.5px;height:15px;background:#efefef;border:2px solid #7b7b7b;border-radius:2.5px;"></div>
<div style="left:743.05px;top:333.4px;width:15.5px;height:15px;background:#dff1fd;border:2px solid #3b97e3;border-radius:2.5px;"></div>
<div style="left:801.05px;top:333.4px;width:15.5px;height:15px;background:#efefef;border:2px solid #7b7b7b;border-radius:2.5px;"></div>
<span class="t" style='left:844.50px;top:333.00px;font-size:12px;line-height:16px;color:#72b572;letter-spacing:0.130px;'>No default</span>
<span class="t" style='left:1093.30px;top:333.00px;font-size:12px;line-height:16px;color:#000;letter-spacing:-0.239px;'>latin1_swedish_ci</span>
<span class="t" style='left:300.61px;top:353.00px;font-size:12px;line-height:16px;color:#000;'>3</span>
<span class="t" style='left:323.30px;top:353.00px;font-size:12px;line-height:16px;color:#000;letter-spacing:0.080px;'>Column 3</span>
<span class="t" style='left:423.30px;top:353.00px;font-size:12px;line-height:16px;color:#267f26;letter-spacing:-0.918px;'>TEXT</span>
<div style="left:681.25px;top:353.4px;width:15.5px;height:15px;background:#efefef;border:2px solid #7b7b7b;border-radius:2.5px;"></div>
<div style="left:743.05px;top:353.4px;width:15.5px;height:15px;background:#dff1fd;border:2px solid #3b97e3;border-radius:2.5px;"></div>
<div style="left:801.05px;top:353.4px;width:15.5px;height:15px;background:#efefef;border:2px solid #7b7b7b;border-radius:2.5px;"></div>
<span class="t" style='left:844.50px;top:353.00px;font-size:12px;line-height:16px;color:#72b572;letter-spacing:0.130px;'>No default</span>
<span class="t" style='left:1093.30px;top:353.00px;font-size:12px;line-height:16px;color:#000;letter-spacing:-0.239px;'>latin1_swedish_ci</span>
<span class="t" style='left:300.61px;top:373.00px;font-size:12px;line-height:16px;color:#000;'>4</span>
<span class="t" style='left:323.30px;top:373.00px;font-size:12px;line-height:16px;color:#000;letter-spacing:0.080px;'>Column 4</span>
<span class="t" style='left:423.30px;top:373.00px;font-size:12px;line-height:16px;color:#4a00c8;letter-spacing:-0.356px;'>FLOAT</span>
<div style="left:681.25px;top:373.4px;width:15.5px;height:15px;background:#dff1fd;border:2px solid #3b97e3;border-radius:2.5px;"></div>
<div style="left:743.05px;top:373.4px;width:15.5px;height:15px;background:#edf7de;border:2px solid #86bf45;border-radius:2.5px;"></div>
<svg style="left:746.05px;top:376.59999999999997px;" width="10" height="9" viewBox="0 0 10 9"><path d="M1.3 4.6 L3.9 7.2 L8.6 1.8" fill="none" stroke="#3b6d1c" stroke-width="1.7"/></svg>
<div style="left:801.05px;top:373.4px;width:15.5px;height:15px;background:#dff1fd;border:2px solid #3b97e3;border-radius:2.5px;"></div>
<span class="t" style='left:844.50px;top:373.00px;font-size:12px;line-height:16px;color:#c3b6e2;letter-spacing:-0.422px;'>NULL</span>
<span class="t" style='left:300.61px;top:393.00px;font-size:12px;line-height:16px;color:#000;'>5</span>
<span class="t" style='left:323.30px;top:393.00px;font-size:12px;line-height:16px;color:#000;letter-spacing:0.080px;'>Column 5</span>
<div style="left:681.25px;top:393.4px;width:15.5px;height:15px;background:#efefef;border:2px solid #7b7b7b;border-radius:2.5px;"></div>
<div style="left:743.05px;top:393.4px;width:15.5px;height:15px;background:#edf7de;border:2px solid #86bf45;border-radius:2.5px;"></div>
<svg style="left:746.05px;top:396.59999999999997px;" width="10" height="9" viewBox="0 0 10 9"><path d="M1.3 4.6 L3.9 7.2 L8.6 1.8" fill="none" stroke="#3b6d1c" stroke-width="1.7"/></svg>
<div style="left:801.05px;top:393.4px;width:15.5px;height:15px;background:#efefef;border:2px solid #7b7b7b;border-radius:2.5px;"></div>
<span class="t" style='left:844.50px;top:393.00px;font-size:12px;line-height:16px;color:#000;letter-spacing:-0.422px;'>NULL</span>
<div style="left:290.5px;top:888.5px;width:73px;height:22.5px;background:linear-gradient(#f0f0f0,#e6e6e6);border:1px solid #acacac;"></div>
<span class="t" style='left:314.00px;top:892.00px;font-size:12px;line-height:16px;color:#000;letter-spacing:0.003px;'>Help</span>
<div style="left:371px;top:888.5px;width:73px;height:22.5px;background:linear-gradient(#f0f0f0,#e6e6e6);border:1px solid #acacac;"></div>
<span class="t" style='left:388.30px;top:892.00px;font-size:12px;line-height:16px;color:#000;letter-spacing:-0.327px;'>Discard</span>
<div style="left:452.5px;top:888.5px;width:73px;height:22.5px;background:linear-gradient(#f0f0f0,#e6e6e6);border:1px solid #3399ff;"></div>
<span class="t" style='left:476.30px;top:892.00px;font-size:12px;line-height:16px;color:#000;letter-spacing:-0.915px;'>Save</span>
<svg style="left:290px;top:927px;" width="10" height="9" viewBox="0 0 10 9"><path d="M1 0.5 L9 8.5 M9 0.5 L1 8.5" stroke="#222" stroke-width="1.4" fill="none"/></svg>
<span class="t" style='left:318.40px;top:925.00px;font-size:12px;line-height:16px;color:#000;letter-spacing:-0.286px;'>Filter:</span>
<div style="left:352.5px;top:922.5px;width:153.5px;height:22px;background:#fff;border:1px solid #ababab;"></div>
<span class="t" style='left:355.50px;top:925.00px;font-size:12px;line-height:16px;color:#6d6d6d;letter-spacing:-0.344px;'>Regular expression</span>
<div style="left:8px;top:949px;width:1920px;height:80px;background:#fff;border-top:1px solid #a0a0a0;border-bottom:1px solid #a0a0a0;border-left:1px solid #c0c0c0;"></div>
<div style="left:9px;top:950px;width:48px;height:78px;background:#f0f0f0;"></div>
<div style="left:1910px;top:950px;width:17px;height:78px;background:#f0f0f0;"></div>
<div style="left:1910px;top:993.5px;width:16px;height:16px;background:#cdcdcd;"></div>
<svg style="left:1912px;top:955px;" width="12" height="8" viewBox="0 0 12 8"><path d="M2 6.5 L6 2.5 L10 6.5" fill="none" stroke="#404040" stroke-width="1.6"/></svg>
<svg style="left:1912px;top:1015px;" width="12" height="8" viewBox="0 0 12 8"><path d="M2 1.5 L6 5.5 L10 1.5" fill="none" stroke="#404040" stroke-width="1.6"/></svg>
<div class='code' style='left:61.7px;top:952.00px;font-family:"Liberation Mono", monospace;font-size:12.4px;line-height:14px;letter-spacing:-0.44px;white-space:pre;'><span style="color:#0000c8;font-weight:bold">SHOW INDEXES FROM</span><span style="color:#000"> </span><span style="color:#808000">`test table`</span><span style="color:#000"> </span><span style="color:#0000c8;font-weight:bold">FROM</span><span style="color:#000"> </span><span style="color:#808000">`methodstools`</span><span style="color:#0000ff">;</span></div>
<span class="t" style='left:24.77px;top:951.00px;font-size:12.4px;line-height:17px;color:#5a5a5a;font-family:"Liberation Mono", monospace;letter-spacing:-0.440px;'>74</span>
<div class='code' style='left:61.7px;top:966.00px;font-family:"Liberation Mono", monospace;font-size:12.4px;line-height:14px;letter-spacing:-0.44px;white-space:pre;'><span style="color:#0000c8;font-weight:bold">SELECT</span><span style="color:#000"> </span><span style="color:#0000ff">*</span><span style="color:#000"> </span><span style="color:#0000c8;font-weight:bold">FROM</span><span style="color:#000"> </span><span style="color:#808000">information_schema</span><span style="color:#0000ff">.</span><span style="color:#808000">REFERENTIAL_CONSTRAINTS</span><span style="color:#000"> </span><span style="color:#0000c8;font-weight:bold">WHERE</span><span style="color:#000">   </span><span style="color:#808000">CONSTRAINT_SCHEMA</span><span style="color:#0000ff">=</span><span style="color:#008000">&#x27;methodstools&#x27;</span><span style="color:#000">   </span><span style="color:#0000c8;font-weight:bold">AND TABLE_NAME</span><span style="color:#0000ff">=</span><span style="color:#008000">&#x27;test table&#x27;</span><span style="color:#000">   </span><span style="color:#0000c8;font-weight:bold">AND</span><span style="color:#000"> </span><span style="color:#808000">REFERENCED_TABLE_NAME</span><span style="color:#000"> </span><span style="color:#0000c8;font-weight:bold">IS NOT NULL</span><span style="color:#0000ff">;</span></div>
<span class="t" style='left:24.77px;top:965.00px;font-size:12.4px;line-height:17px;color:#5a5a5a;font-family:"Liberation Mono", monospace;letter-spacing:-0.440px;'>75</span>
<div class='code' style='left:61.7px;top:980.00px;font-family:"Liberation Mono", monospace;font-size:12.4px;line-height:14px;letter-spacing:-0.44px;white-space:pre;'><span style="color:#0000c8;font-weight:bold">SELECT</span><span style="color:#000"> </span><span style="color:#0000ff">*</span><span style="color:#000"> </span><span style="color:#0000c8;font-weight:bold">FROM</span><span style="color:#000"> </span><span style="color:#808000">information_schema</span><span style="color:#0000ff">.</span><span style="color:#808000">KEY_COLUMN_USAGE</span><span style="color:#000"> </span><span style="color:#0000c8;font-weight:bold">WHERE</span><span style="color:#000">   </span><span style="color:#808000">TABLE_SCHEMA</span><span style="color:#0000ff">=</span><span style="color:#008000">&#x27;methodstools&#x27;</span><span style="color:#000">   </span><span style="color:#0000c8;font-weight:bold">AND TABLE_NAME</span><span style="color:#0000ff">=</span><span style="color:#008000">&#x27;test table&#x27;</span><span style="color:#000">   </span><span style="color:#0000c8;font-weight:bold">AND</span><span style="color:#000"> </span><span style="color:#808000">REFERENCED_TABLE_NAME</span><span style="color:#000"> </span><span style="color:#0000c8;font-weight:bold">IS NOT NULL</span><span style="color:#0000ff">;</span></div>
<span class="t" style='left:24.77px;top:979.00px;font-size:12.4px;line-height:17px;color:#5a5a5a;font-family:"Liberation Mono", monospace;letter-spacing:-0.440px;'>76</span>
<div class='code' style='left:61.7px;top:994.00px;font-family:"Liberation Mono", monospace;font-size:12.4px;line-height:14px;letter-spacing:-0.44px;white-space:pre;'><span style="color:#0000c8;font-weight:bold">SHOW CREATE TABLE</span><span style="color:#000"> </span><span style="color:#808000">`methodstools`</span><span style="color:#0000ff">.</span><span style="color:#808000">`test table`</span><span style="color:#0000ff">;</span></div>
<span class="t" style='left:24.77px;top:993.00px;font-size:12.4px;line-height:17px;color:#5a5a5a;font-family:"Liberation Mono", monospace;letter-spacing:-0.440px;'>77</span>
<div class='code' style='left:61.7px;top:1008.00px;font-family:"Liberation Mono", monospace;font-size:12.4px;line-height:14px;letter-spacing:-0.44px;white-space:pre;'><span style="color:#808080;font-style:italic">/* #58: Abstract Error Message CharCode:0 Msg:514 */</span></div>
<span class="t" style='left:24.77px;top:1007.00px;font-size:12.4px;line-height:17px;color:#5a5a5a;font-family:"Liberation Mono", monospace;letter-spacing:-0.440px;'>78</span>
<div style="left:819px;top:1031px;width:1px;height:16px;background:#d0d0d0;"></div>
<div style="left:1013px;top:1031px;width:1px;height:16px;background:#d0d0d0;"></div>
<div style="left:1213px;top:1031px;width:1px;height:16px;background:#d0d0d0;"></div>
<div style="left:1432px;top:1031px;width:1px;height:16px;background:#d0d0d0;"></div>
<div style="left:1627px;top:1031px;width:1px;height:16px;background:#d0d0d0;"></div>
<svg style="left:823px;top:1031px;" width="16" height="16" viewBox="0 0 16 16"><circle cx="8" cy="8" r="6.6" fill="#fff" stroke="#18a0b8" stroke-width="1.8"/><path d="M8 4.2V8.3L10.6 10.2" fill="none" stroke="#444" stroke-width="1.4"/></svg>
<span class="t" style='left:841.60px;top:1032.00px;font-size:12px;line-height:16px;color:#000;letter-spacing:-0.264px;'>Connected: 01:41 h</span>
<span class="t" style='left:1035.00px;top:1032.00px;font-size:12px;line-height:16px;color:#000;letter-spacing:-0.439px;'>MySQL 5.7.26</span>
<span class="t" style='left:1218.20px;top:1032.00px;font-size:12px;line-height:16px;color:#000;letter-spacing:-0.221px;'>Uptime: 01:44 h</span>
<svg style="left:1436px;top:1031px;" width="16" height="16" viewBox="0 0 16 16"><circle cx="8" cy="8" r="6.6" fill="#fff" stroke="#18a0b8" stroke-width="1.8"/><path d="M8 4.2V8.3L10.6 10.2" fill="none" stroke="#444" stroke-width="1.4"/></svg>
<span class="t" style='left:1455.00px;top:1032.00px;font-size:12px;line-height:16px;color:#000;letter-spacing:-0.286px;'>Server time: 11:09</span>
<svg style="left:1631px;top:1031px;" width="16" height="16" viewBox="0 0 16 16"><circle cx="8" cy="8" r="6.6" fill="#fff" stroke="#9c27b0" stroke-width="1.6"/></svg>
<span class="t" style='left:1649.00px;top:1032.00px;font-size:12px;line-height:16px;color:#000;letter-spacing:-0.138px;'>Idle.</span>
<svg style="left:1018px;top:1031px;" width="15" height="15" viewBox="0 0 15 15"><path d="M1 1.5 C3 0.5 6.5 2.5 8.5 6 C10 8.8 11 10.5 13.8 12.2 L11.8 12.4 L13.8 14.2 C10.5 13.6 8.6 11.5 7 9 C6.3 7.9 5.2 7.8 4.2 8.8 L4.3 11 L3 9.6 C2.4 6.5 2.8 3.5 1 1.5 Z" fill="none" stroke="#4e9fc0" stroke-width="0.9" stroke-linejoin="round"/></svg>
<div style="left:8px;top:1048px;width:1920px;height:8px;background:#b0b88c;"></div>
<div style="left:8px;top:1048px;width:675px;height:8px;background:repeating-linear-gradient(100deg,#57742a 0,#7d9445 7px,#4f6c22 13px,#8aa052 21px,#5f7c2e 29px);"></div>
<div style="left:8px;top:1048px;width:1920px;height:1px;background:rgba(60,70,30,0.35);"></div>
<div style="left:60px;top:1049px;width:58px;height:8px;background:rgba(200,215,160,0.35);border:1px solid rgba(225,235,200,0.55);"></div>
<div style="left:122px;top:1049px;width:58px;height:8px;background:rgba(200,215,160,0.35);border:1px solid rgba(225,235,200,0.55);"></div>
<div style="left:184px;top:1049px;width:58px;height:8px;background:rgba(200,215,160,0.35);border:1px solid rgba(225,235,200,0.55);"></div>
<div style="left:556px;top:1049px;width:58px;height:8px;background:rgba(200,215,160,0.35);border:1px solid rgba(225,235,200,0.55);"></div>
<div style="left:618px;top:1049px;width:58px;height:8px;background:rgba(200,215,160,0.35);border:1px solid rgba(225,235,200,0.55);"></div>
<div style="left:867px;top:1049px;width:58px;height:8px;background:rgba(225,232,200,0.45);border:1px solid rgba(240,245,225,0.7);"></div>
<div style="left:1052px;top:1049px;width:58px;height:8px;background:rgba(225,232,200,0.45);border:1px solid rgba(240,245,225,0.7);"></div>
<div style="left:1176px;top:1049px;width:58px;height:8px;background:rgba(225,232,200,0.45);border:1px solid rgba(240,245,225,0.7);"></div>
<div style="left:1238px;top:1049px;width:58px;height:8px;background:rgba(240,244,225,0.7);border:1px solid rgba(250,252,240,0.9);"></div>
<span class="t" style='left:705.60px;top:1047.00px;font-size:12px;line-height:16px;color:#5e6740;letter-spacing:-0.289px;'>308 élément(s)</span>
<span class="t" style='left:803.60px;top:1047.00px;font-size:12px;line-height:16px;color:#5e6740;letter-spacing:-0.223px;'>1 élément sélectionné  482 Ko</span>
<div style="left:508px;top:1053px;width:30px;height:3px;background:#0a8a0a;"></div>
<div style="left:817px;top:1053px;width:32px;height:3px;background:#c40000;"></div>
<div style="left:328px;top:1052px;width:17px;height:4px;background:#d82020;border-radius:9px 9px 0 0"></div>
<div style="left:390px;top:1052px;width:18px;height:4px;background:#e01818;border-radius:9px 9px 0 0"></div>
<div style="left:947px;top:1053px;width:21px;height:3px;background:#e8189a;border-radius:10px 10px 0 0"></div>
<div style="left:885px;top:1053px;width:16px;height:3px;background:#f08a18;border-radius:8px 8px 0 0"></div>
<div style="left:1259px;top:1052px;width:16px;height:4px;background:#6cc04a;border-radius:8px 8px 0 0"></div>
<div style="left:1131px;top:1052px;width:14px;height:4px;background:#f4f4f4;"></div>
<div style="left:1145px;top:1052px;width:10px;height:4px;background:#5a5a5a;"></div>
<div style="left:1194px;top:1052px;width:14px;height:4px;background:#f0f6ff;border:1px solid #1e88e5;border-bottom:none;"></div>
<div style="left:1208px;top:1052px;width:8px;height:4px;background:#1e88e5;"></div>
<svg style="left:1010px;top:1052px;" width="18" height="4" viewBox="0 0 18 4"><path d="M0 4 L9 0.3 L18 4Z" fill="#3f6fc0"/></svg>
<svg style="left:87px;top:1052px;" width="10" height="4" viewBox="0 0 10 4"><path d="M0 4 L5 0 L10 4Z" fill="#f5d21a"/></svg>
<div style="left:759px;top:1054px;width:22px;height:2px;background:#e8f0fa;border:1px solid #7aa0d0;border-bottom:none;"></div>
<svg style="left:268px;top:1052px;" width="24" height="4" viewBox="0 0 24 4"><path d="M2 4 C6 0.5 16 0.5 22 4" fill="none" stroke="#f2c81e" stroke-width="1.6"/><path d="M6 4 C9 2.4 14 2.4 17 4" fill="none" stroke="#2a7fd0" stroke-width="1.4"/></svg>
<div style="left:40px;top:1054px;width:5px;height:2px;background:#f0f0f0;"></div>
<div style="left:413px;top:391px;width:178px;height:250px;background:#fff;border:1px solid #9a9a9a;"></div>
<div style="left:574px;top:392px;width:16px;height:248px;background:#f0f0f0;"></div>
<div style="left:574px;top:441px;width:15px;height:54px;background:#cdcdcd;"></div>
<svg style="left:576px;top:397px;" width="12" height="8" viewBox="0 0 12 8"><path d="M2 6.5 L6 2.5 L10 6.5" fill="none" stroke="#404040" stroke-width="1.6"/></svg>
<svg style="left:576px;top:627px;" width="12" height="8" viewBox="0 0 12 8"><path d="M2 1.5 L6 5.5 L10 1.5" fill="none" stroke="#404040" stroke-width="1.6"/></svg>
<div style="left:414px;top:463px;width:156px;height:22px;background:#e5f3fb;border:1px solid #70c0e7;"></div>
<div style="left:414px;top:507px;width:156px;height:22px;background:#a6d2f5;border:1px solid #3a8fd8;"></div>
<span class="t" style='left:420.00px;top:400.00px;font-size:12px;line-height:16px;color:#000;font-weight:bold;letter-spacing:-0.090px;'>Real</span>
<span class="t" style='left:438.00px;top:422.00px;font-size:12px;line-height:16px;color:#4a00c8;letter-spacing:-0.356px;'>FLOAT</span>
<span class="t" style='left:438.00px;top:444.00px;font-size:12px;line-height:16px;color:#4a00c8;letter-spacing:-0.893px;'>DOUBLE</span>
<span class="t" style='left:438.00px;top:466.00px;font-size:12px;line-height:16px;color:#4a00c8;letter-spacing:-0.478px;'>DECIMAL</span>
<span class="t" style='left:420.00px;top:488.00px;font-size:12px;line-height:16px;color:#000;font-weight:bold;letter-spacing:0.051px;'>Text</span>
<span class="t" style='left:438.00px;top:510.00px;font-size:12px;line-height:16px;color:#1a1a1a;letter-spacing:-0.471px;'>VARCHAR</span>
<span class="t" style='left:438.00px;top:532.00px;font-size:12px;line-height:16px;color:#267f26;letter-spacing:-0.504px;'>CHAR</span>
<span class="t" style='left:438.00px;top:554.00px;font-size:12px;line-height:16px;color:#267f26;letter-spacing:-0.627px;'>TINYTEXT</span>
<span class="t" style='left:438.00px;top:576.00px;font-size:12px;line-height:16px;color:#267f26;letter-spacing:-0.918px;'>TEXT</span>
<span class="t" style='left:438.00px;top:598.00px;font-size:12px;line-height:16px;color:#267f26;letter-spacing:-0.534px;'>MEDIUMTEXT</span>
<span class="t" style='left:438.00px;top:620.00px;font-size:12px;line-height:16px;color:#267f26;letter-spacing:-0.711px;'>LONGTEXT</span>
<div style="left:172.5px;top:465.5px;width:249.5px;height:187px;background:#ffffe1;border:1px solid #767676;box-shadow:1px 1px 2px rgba(0,0,0,0.25);"></div>
<span class="t" style='left:177.60px;top:467.00px;font-size:12px;line-height:16px;color:#000;letter-spacing:-0.338px;'>DECIMAL[(M[,D])] [UNSIGNED] [ZEROFILL]</span>
<span class="t" style='left:177.60px;top:482.00px;font-size:12px;line-height:16px;color:#000;letter-spacing:0.045px;'>A packed &quot;exact&quot; fixed-point number. M is</span>
<span class="t" style='left:177.60px;top:497.00px;font-size:12px;line-height:16px;color:#000;letter-spacing:0.051px;'>the total number of digits (the precision) and</span>
<span class="t" style='left:177.60px;top:512.00px;font-size:12px;line-height:16px;color:#000;letter-spacing:0.001px;'>D is the number of digits after the decimal</span>
<span class="t" style='left:177.60px;top:527.00px;font-size:12px;line-height:16px;color:#000;letter-spacing:0.017px;'>point (the scale). The decimal point and (for</span>
<span class="t" style='left:177.60px;top:542.00px;font-size:12px;line-height:16px;color:#000;letter-spacing:0.005px;'>negative numbers) the &quot;-&quot; sign are not</span>
<span class="t" style='left:177.60px;top:557.00px;font-size:12px;line-height:16px;color:#000;letter-spacing:-0.140px;'>counted in M. If D is 0, values have no</span>
<span class="t" style='left:177.60px;top:572.00px;font-size:12px;line-height:16px;color:#000;letter-spacing:0.057px;'>decimal point or fractional part. The</span>
<span class="t" style='left:177.60px;top:587.00px;font-size:12px;line-height:16px;color:#000;letter-spacing:0.036px;'>maximum number of digits (M) for DECIMAL</span>
<span class="t" style='left:177.60px;top:602.00px;font-size:12px;line-height:16px;color:#000;letter-spacing:-0.010px;'>is 65. The maximum number of supported</span>
<span class="t" style='left:177.60px;top:617.00px;font-size:12px;line-height:16px;color:#000;letter-spacing:-0.089px;'>decimals (D) is 30. If D is omitted, the default</span>
<span class="t" style='left:177.60px;top:632.00px;font-size:12px;line-height:16px;color:#000;letter-spacing:-0.092px;'>is 0. If M is omitted, the default is 10.</span>
</body></html>
